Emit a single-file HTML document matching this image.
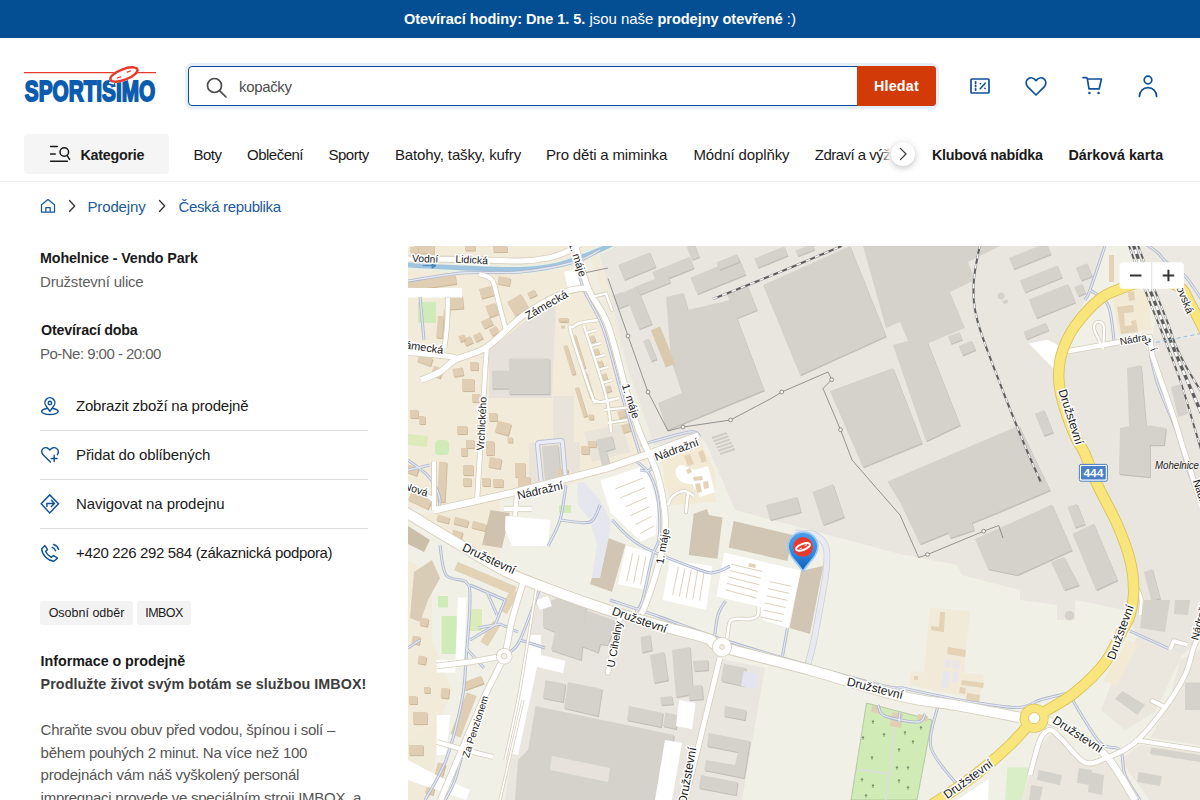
<!DOCTYPE html>
<html lang="cs">
<head>
<meta charset="utf-8">
<title>Mohelnice - Vendo Park | Sportisimo</title>
<style>
*{box-sizing:border-box;margin:0;padding:0}
html,body{width:1200px;height:800px;overflow:hidden;background:#fff}
body{font-family:"Liberation Sans","DejaVu Sans",sans-serif;font-size:15px;color:#1a1a1a;position:relative}
.abs{position:absolute;white-space:nowrap}
.topbar{position:absolute;left:0;top:0;width:1200px;height:38px;background:#044e94;color:#fff}
.topbar .t{position:absolute;left:404px;top:10px;width:392px;font-size:15px;line-height:18px;white-space:nowrap}
.search{position:absolute;left:188px;top:66px;width:748px;height:40px;border:1.5px solid #0a4f96;border-radius:4px;background:#fff;box-shadow:0 0 0 3px #e6eef8}
.hledat{position:absolute;left:857px;top:66px;width:79px;height:40px;background:#d23a08;border-radius:0 4px 4px 0;color:#fff;font-size:14.3px;font-weight:bold}
.kat{position:absolute;left:24px;top:134px;width:145px;height:40px;background:#f5f5f5;border-radius:4px}
.nav{font-size:15px;line-height:20px;top:144.5px;color:#1a1a1a}
.navline{position:absolute;left:0;top:181px;width:1200px;height:1px;background:#ececec}
.bc{color:#1b5a9c;font-size:15px;line-height:20px;top:197.1px}
.h{font-weight:bold;font-size:14.3px;line-height:20px;color:#1a1a1a}
.g{font-size:15px;line-height:20px;color:#5f5f5f}
.row{font-size:15px;line-height:20px;color:#1a1a1a;left:76px}
.sep{position:absolute;left:40px;width:328px;height:1px;background:#dcdcdc}
.tag{position:absolute;top:600.5px;height:24px;background:#f3f3f3;border-radius:3px;font-size:12.5px;line-height:24px;color:#1a1a1a;text-align:center;white-space:nowrap}
#map{position:absolute;left:408px;top:246px;width:792px;height:554px;overflow:hidden;background:#e9e6df;border-radius:3px 0 0 0}
</style>
</head>
<body>
<!-- TOP BAR -->
<div class="topbar"><div class="t" id="tb" style="letter-spacing:-0.03px"><b style="font-size:14.5px">Otevírací hodiny: Dne 1. 5.</b> jsou naše <b style="font-size:14.5px">prodejny otevřené</b> :)</div></div>

<!-- LOGO -->
<svg class="abs" style="left:20px;top:60px" width="144" height="48" viewBox="20 60 144 48">
  <line x1="24" y1="72.600" x2="156" y2="72.600" stroke="#e8392f" stroke-width="1.100"/>
  <text id="logot" x="24.800" y="101.100" font-family="Liberation Sans, sans-serif" font-weight="bold" font-size="29.600" fill="#0b5cae" stroke="#0b5cae" stroke-width="1.900" stroke-linejoin="miter" textLength="130.400" lengthAdjust="spacingAndGlyphs">SPORTISIMO</text>
  <g transform="translate(0 0.900) rotate(-21 123.900 73.600)">
    <ellipse cx="123.900" cy="73.600" rx="15.600" ry="6.600" fill="#fff"/>
    <ellipse cx="123.900" cy="73.600" rx="14.400" ry="5.300" fill="none" stroke="#e8392f" stroke-width="2.500"/>
    <path d="M136.500 68.500 L140.500 71.500 M111.300 78.700 L107.300 75.700" stroke="#fff" stroke-width="1.600"/>
    <path d="M116 74.600 h4.500 M127.300 72.600 h4.500" stroke="#e8392f" stroke-width="1.200"/>
  </g>
</svg>

<!-- SEARCH -->
<div class="search"></div>
<svg class="abs" style="left:204px;top:74.5px" width="26" height="26" viewBox="0 0 26 26" fill="none" stroke="#4a4a4a" stroke-width="1.7" stroke-linecap="round"><circle cx="10.5" cy="10.5" r="7"/><path d="M15.8 15.8 L22 22"/></svg>
<div class="abs" id="kop" style="left:239.00px;top:76.7px;font-size:15px;line-height:20px;color:#4d4d4d;letter-spacing:-0.333px">kopačky</div>
<div class="hledat"><span class="abs" id="hl" style="left:17.00px;top:10px;line-height:20px;letter-spacing:0.200px">Hledat</span></div>

<!-- HEADER ICONS -->
<svg class="abs" style="left:966px;top:72px" width="28" height="28" viewBox="0 0 28 28" fill="none" stroke="#0f5299" stroke-width="1.7" stroke-linejoin="round" stroke-linecap="round">
  <rect x="5" y="7" width="18" height="14" rx="0.8"/>
  <path d="M9.6 10v1.2M9.6 13.4v1.2M9.6 16.8v1.2" stroke-width="1.8"/>
  <path d="M19.2 11.2l-5 5.6" stroke-width="1.6"/>
  <circle cx="14.4" cy="11.6" r="0.9" fill="#0f5299" stroke="none"/><circle cx="19" cy="16.4" r="0.9" fill="#0f5299" stroke="none"/>
</svg>
<svg class="abs" style="left:1022px;top:72px" width="28" height="28" viewBox="0 0 28 28" fill="none" stroke="#0f5299" stroke-width="1.7" stroke-linejoin="round"><path d="M14 23 L5.8 14.8 C3.4 12.4 3.6 8.6 6.2 6.8 C8.6 5.1 11.8 5.8 14 8.6 C16.2 5.8 19.4 5.1 21.8 6.8 C24.4 8.6 24.6 12.4 22.2 14.8 Z"/></svg>
<svg class="abs" style="left:1078px;top:72px" width="28" height="28" viewBox="0 0 28 28" fill="none" stroke="#0f5299" stroke-width="1.7" stroke-linejoin="round" stroke-linecap="round"><path d="M5 5.6h3.2c.6 0 1 .4 1.1 1L11 16.8h10.2L23.4 7H9.6"/><circle cx="11.4" cy="21" r="1.3" fill="#0f5299" stroke="none"/><circle cx="20.6" cy="21" r="1.3" fill="#0f5299" stroke="none"/></svg>
<svg class="abs" style="left:1134px;top:72px" width="28" height="28" viewBox="0 0 28 28" fill="none" stroke="#0f5299" stroke-width="1.7" stroke-linecap="round"><circle cx="14" cy="8" r="3.8"/><path d="M5.4 24.4c0-5 3.8-8.8 8.6-8.8s8.6 3.800 8.600 8.800"/></svg>

<!-- NAV -->
<div class="kat"></div>
<svg class="abs" style="left:48px;top:142px" width="24" height="24" viewBox="0 0 24 24" fill="none" stroke="#1a1a1a" stroke-width="1.5" stroke-linecap="round"><path d="M2.600 4.500h6.800M2.600 12h4.600M2.600 19.200h16.800"/><circle cx="16.300" cy="10" r="4.300"/><path d="M19 13.400l2.600 4"/></svg>
<div class="abs nav" id="n0" style="left:80.50px;font-weight:bold;font-size:14.3px;letter-spacing:-0.249px">Kategorie</div>
<div class="abs nav" id="n1" style="left:193.50px;letter-spacing:-0.500px">Boty</div>
<div class="abs nav" id="n2" style="left:247.00px;letter-spacing:-0.500px">Oblečení</div>
<div class="abs nav" id="n3" style="left:328.50px;letter-spacing:-0.500px">Sporty</div>
<div class="abs nav" id="n4" style="left:395.00px;letter-spacing:-0.131px">Batohy, tašky, kufry</div>
<div class="abs nav" id="n5" style="left:546.00px;letter-spacing:-0.176px">Pro děti a miminka</div>
<div class="abs nav" id="n6" style="left:693.50px;letter-spacing:-0.125px">Módní doplňky</div>
<div class="abs nav" id="n7" style="left:814.8px;width:80px;letter-spacing:-0.52px;overflow:hidden">Zdraví a výživa</div>
<div class="abs" style="left:881px;top:134px;width:39px;height:46px;background:linear-gradient(90deg,rgba(255,255,255,0),#fff 26%)"></div>
<div class="abs" style="left:891px;top:142px;width:24px;height:24px;border-radius:12px;background:#fff;box-shadow:0 2px 7px rgba(0,0,0,.24)"></div>
<svg class="abs" style="left:891px;top:142px" width="24" height="24" viewBox="0 0 24 24" fill="none" stroke="#3a3a3a" stroke-width="1.25" stroke-linecap="round" stroke-linejoin="round"><path d="M9.400 6.400l5.600 5.600-5.600 5.600"/></svg>
<div class="abs nav" id="n8" style="left:932.00px;font-weight:bold;font-size:14.3px;letter-spacing:-0.250px">Klubová nabídka</div>
<div class="abs nav" id="n9" style="left:1068.50px;font-weight:bold;font-size:14.3px;letter-spacing:-0.000px">Dárková karta</div>
<div class="navline"></div>

<!-- BREADCRUMB -->
<svg class="abs" style="left:38px;top:196px" width="20" height="20" viewBox="0 0 20 20" fill="none" stroke="#1b5a9c" stroke-width="1.3" stroke-linejoin="round"><path d="M3.500 8.800L10 3.600l6.500 5.200V16.200H3.500z"/><path d="M7.800 16.200v-4.600h4.400v4.600"/></svg>
<svg class="abs" style="left:62px;top:196px" width="20" height="20" viewBox="0 0 20 20" fill="none" stroke="#333" stroke-width="1.3" stroke-linecap="round" stroke-linejoin="round"><path d="M7.500 4.500l5.200 5.500-5.200 5.500"/></svg>
<div class="abs bc" id="b1" style="left:87.50px;letter-spacing:-0.143px">Prodejny</div>
<svg class="abs" style="left:152px;top:196px" width="20" height="20" viewBox="0 0 20 20" fill="none" stroke="#333" stroke-width="1.3" stroke-linecap="round" stroke-linejoin="round"><path d="M7.500 4.500l5.200 5.500-5.200 5.500"/></svg>
<div class="abs bc" id="b2" style="left:178.50px;letter-spacing:-0.357px">Česká republika</div>

<!-- LEFT PANEL -->
<div class="abs h" id="l1" style="left:40.00px;top:248.20px;letter-spacing:-0.119px">Mohelnice - Vendo Park</div>
<div class="abs g" id="l2" style="left:40.00px;top:272.20px;letter-spacing:-0.200px">Družstevní ulice</div>
<div class="abs h" id="l3" style="left:41.00px;top:320.20px;letter-spacing:-0.192px">Otevírací doba</div>
<div class="abs g" id="l4" style="left:40.00px;top:344.20px;letter-spacing:-0.528px">Po-Ne: 9:00 - 20:00</div>

<div class="abs row" id="r1" style="top:396.20px;letter-spacing:-0.200px">Zobrazit zboží na prodejně</div>
<div class="sep" style="top:430px"></div>
<div class="abs row" id="r2" style="top:445.20px;letter-spacing:-0.126px">Přidat do oblíbených</div>
<div class="sep" style="top:479px"></div>
<div class="abs row" id="r3" style="top:494.20px;letter-spacing:-0.080px">Navigovat na prodejnu</div>
<div class="sep" style="top:528px"></div>
<div class="abs row" id="r4" style="top:543.20px;letter-spacing:-0.345px">+420 226 292 584 (zákaznická podpora)</div>


<!-- ROW ICONS -->
<svg class="abs" style="left:38px;top:393px" width="24" height="24" viewBox="0 0 24 24" fill="none" stroke="#0f5299" stroke-width="1.45" stroke-linejoin="round" stroke-linecap="round"><ellipse cx="11.9" cy="18.400" rx="8.300" ry="3.100"/><path d="M11.900 18.200 L8 12.900 A5 5 0 1 1 15.800 12.900 Z" fill="#fff"/><circle cx="11.900" cy="10" r="1.700"/></svg>
<svg class="abs" style="left:38px;top:442px" width="24" height="24" viewBox="0 0 24 24" fill="none" stroke="#0f5299" stroke-width="1.45" stroke-linejoin="round" stroke-linecap="round"><path d="M12.400 19.900 L5.300 13.100 C3.100 10.900 3.300 7.900 5.200 6.500 C7.400 4.900 10.200 5.600 11.900 8.100 C13.600 5.600 16.400 4.900 18.600 6.500 C20.500 7.900 20.700 10.600 19.400 12.700"/><path d="M13.300 16.400 h5.800 M16.200 13.300 v6.300"/></svg>
<svg class="abs" style="left:38px;top:492px" width="24" height="24" viewBox="0 0 24 24" fill="none" stroke="#0f5299" stroke-width="1.45" stroke-linejoin="miter" stroke-linecap="round"><path d="M3.200 11.800 L11.700 2.900 L20.500 11.800 L11.700 20.900 Z"/><path d="M8.900 14.500 V11.400 H16.300 M13.400 8.300 L16.400 11.400 L13.400 14.500"/></svg>
<svg class="abs" style="left:38px;top:540px" width="24" height="24" viewBox="0 0 24 24" fill="none" stroke="#0f5299" stroke-width="1.45" stroke-linejoin="round" stroke-linecap="round"><path d="M6.900 5.600 L3.600 8.900 C4.300 15.200 9.600 20.500 15.900 21.300 L19.500 18.100 L15.500 15.500 L13.400 17.300 C10.900 16 8.800 14 7.600 11.500 L9.500 9.400 Z"/><path d="M14.200 7.400 C15.800 8 17 9.200 17.600 10.750 M15.500 4.400 C18 5.200 19.800 7 20.600 9.400"/></svg>
<div class="tag" id="t1" style="left:40px;width:93px;letter-spacing:0px">Osobní odběr</div>
<div class="tag" id="t2" style="left:137px;width:54px;letter-spacing:-0.6px">IMBOX</div>

<div class="abs h" id="l5" style="left:40.60px;top:651.20px;letter-spacing:-0.042px">Informace o prodejně</div>
<div class="abs h" id="l6" style="left:40.60px;top:674.20px;color:#3d3d3d;letter-spacing:0.074px">Prodlužte život svým botám se službou IMBOX!</div>
<div class="abs g" id="p1" style="left:40.60px;top:719.20px;line-height:22.500px;color:#555;letter-spacing:-0.259px">Chraňte svou obuv před vodou, špínou i solí –</div>
<div class="abs g" id="p2" style="left:40.60px;top:741.70px;line-height:22.500px;color:#555;letter-spacing:-0.270px">během pouhých 2 minut. Na více než 100</div>
<div class="abs g" id="p3" style="left:40.60px;top:764.20px;line-height:22.500px;color:#555;letter-spacing:-0.222px">prodejnách vám náš vyškolený personál</div>
<div class="abs g" id="p4" style="left:40.60px;top:786.70px;line-height:22.500px;color:#555;letter-spacing:-0.251px">impregnaci provede ve speciálním stroji IMBOX, a</div>

<!-- MAP -->
<div id="map">
<svg id="mapsvg" width="792" height="554" viewBox="408 246 792 554" style="position:absolute;left:0;top:0">
<!--MAPSTART-->
<rect x="408" y="246" width="792" height="554" fill="#f0f0e6"/>
<polygon points="408,246 596,246 612,300 640,430 650,460 560,487 513,493 434,511 408,508" fill="#f3ebda" />
<polygon points="408,512 434,513 500,498 500,560 470,548 440,530 408,516" fill="#f3ebda" />
<polygon points="408,560 432,575 432,640 452,690 440,720 408,740" fill="#f3ebda" />
<polygon points="408,740 440,720 430,800 408,800" fill="#f0ead9" />
<polygon points="597,246 1104,246 1090,290 1072,326 1060,351 1150,338 1200,338 1200,640 1182,655 1137,637 1125,610 1075,600 1075,620 1057,620 1057,605 1020,600 1020,590 962,575 957,565 900,554 735,510 707,445 700,437 645,447 612,300" fill="#e9e6df" />
<polygon points="583,262 592,258 604,300 655,447 645,449 612,330" fill="#eeeee2" />
<polygon points="1128,246 1200,246 1200,338 1152,338 1160,300" fill="#ebe9e2" />
<polygon points="1112,292 1148,290 1152,330 1118,333" fill="#f3ead6" />
<polygon points="1137,637 1182,655 1155,712 1125,730 1101,710 1112,682" fill="#ebe7de" />
<polygon points="1040,745 1052,733 1062,742 1085,766 1110,762 1135,800 1022,800 1030,775" fill="#ebe7de" />
<polygon points="1140,745 1200,752 1200,800 1150,800 1120,760" fill="#ebe7de" />
<polygon points="1180,660 1200,650 1200,745 1150,738 1168,706" fill="#ebe7de" />
<polygon points="1128,640 1138,645 1117,686 1103,680" fill="#f3ead6" />
<polygon points="536,592 608,612 660,628 715,645 722,659 765,668 742,800 505,800 512,754" fill="#e9e6df" />
<polygon points="930,607.5 970,611 964,672.5 984,675 980,700 909,685 911,671 924,672.5" fill="#f2ead9" />
<polygon points="661,452 700,440 715,470 716,502 672,505 664,480" fill="#f3ead6" />
<polygon points="556,302 552,398 489,398 489,350 528,319" fill="#e6e2db" />
<polygon points="584,432 622,424 630,452 592,462" fill="#e9e4da" />
<polygon points="553,396 574,396 574,442 580,442 580,478 529,490 529,443 553,443" fill="#e9e4da" />
<polygon points="418,302 436,302 436,323 418,323" fill="#cfecb8" />
<polygon points="441.7,616 456.7,616 456.7,654 441.7,654" fill="#cfecb8" />
<polygon points="468,609 482,609 482,631 468,631" fill="#dcebb9" />
<polygon points="438,596 448,596 448,607.5 438,607.5" fill="#cfecb8" />
<polygon points="408,434 428,436 427,447 408,445" fill="#dcebb9" />
<rect x="435" y="440" width="14" height="15" rx="4" fill="#cfecb8"/>
<polygon points="559,505 571,505 571,513 559,513" fill="#cfecb8" />
<polygon points="1007.5,767.5 1030,767.5 1022,800 1005,800" fill="#d9edc6" />
<polygon points="866.5,703 932,720 917,800 851,800" fill="#d0ebb5" stroke="#9bb08a" stroke-width="0.6"/>
<polyline points="895,727 886,800" fill="none" stroke="#dddde2" stroke-width="1.6" />
<polyline points="857.5,769.5 888.7,773.7" fill="none" stroke="#dddde2" stroke-width="1.6" />
<path d="M400 264.8 C410.7 265.3 443.9 267.2 464 268 C484.1 268.8 504.8 269.9 520.5 269.4 C536.2 268.9 545.5 267.8 558 264.8 C570.5 261.8 586.5 255.1 595.5 251.6 C604.5 248.1 609.2 245.3 612 244" fill="none" stroke="#e9efe2" stroke-width="9" />
<path d="M400 264.8 C410.7 265.3 443.9 267.2 464 268 C484.1 268.8 504.8 269.9 520.5 269.4 C536.2 268.9 545.5 267.8 558 264.8 C570.5 261.8 586.5 255.1 595.5 251.6 C604.5 248.1 609.2 245.3 612 244" fill="none" stroke="#9fc4dd" stroke-width="4.8" />
<path d="M423 265.700 h12 M432 263.200 l4 2.500 -4 2.500 z" stroke="#4a86b8" stroke-width="1" fill="#4a86b8"/>
<polygon points="666.9,298.3 683.9,294.3 688.9,311.3 730.9,301.3 764.9,391.3 667.9,431.3 658.9,404.3 682.9,394.3 671.9,361.3" fill="#c2bfb8" />
<polygon points="763.9,286.3 850.9,247.3 886.9,337.3 800.9,376.3" fill="#c2bfb8" />
<polygon points="830.9,392.3 893.9,369.3 922.9,444.3 863.9,468.3" fill="#c2bfb8" />
<polygon points="893.9,346.3 925.9,337.3 960.9,426.3 926.9,442.3" fill="#c2bfb8" />
<polygon points="888.4,482.8 1019.9,426.8 1050.9,491.3 996.9,514.3 920.9,545.3 900.9,503.3" fill="#c2bfb8" />
<polygon points="975.9,540.3 1052.9,505.8 1072.9,551.3 1050.9,561.3 1017.9,576.3 988.9,570.3" fill="#c2bfb8" />
<polygon points="1073.4,535 1094.6,525 1118.4,581.3 1096.9,591.3" fill="#c2bfb8" />
<polygon points="1068.4,508.3 1077.9,505 1085.9,525.3 1075.9,528.8" fill="#c2bfb8" />
<polygon points="1051.9,563.3 1064.9,558.3 1079.9,586.3 1064.9,591.3" fill="#c2bfb8" />
<polygon points="1127.9,369.3 1141.9,366.3 1146.9,426.3 1166.9,429.3 1164.9,446.3 1150.9,446.3 1150.9,478.3 1119.9,475.3 1120.9,429.3 1129.9,427.3" fill="#c2bfb8" />
<polygon points="536.4,707.3 674.9,736.3 663.9,801.3 515.9,801.3 518.9,761.3 528.9,751.3" fill="#c2bfb8" />
<polygon points="546.4,681.3 566.4,685.3 563.9,703.3 543.9,699.3" fill="#c2bfb8" />
<polygon points="568.9,683.3 602.9,690.3 598.9,717.3 564.9,709.3" fill="#c2bfb8" />
<polygon points="543.9,608.3 552.9,601.3 562.9,598.3 586.9,608.3 581.9,661.3 551.9,651.3 555.9,633.3 543.9,628.3" fill="#c2bfb8" />
<polygon points="586.9,611.3 616.4,622.3 608.9,646.3 600.9,645.3 598.9,653.8 581.9,647.3" fill="#c2bfb8" />
<polygon points="641.4,638.3 650.9,636.3 652.9,651.3 642.9,653.8" fill="#c2bfb8" />
<polygon points="650.9,656.3 664.9,653.3 668.9,681.3 654.9,684.3" fill="#c2bfb8" />
<polygon points="672.9,651.3 690.9,648.3 693.9,695.3 676.9,698.3" fill="#c2bfb8" />
<polygon points="693.9,662.3 708.9,661.3 708.9,671.3 694.9,672.3" fill="#c2bfb8" />
<polygon points="661.4,698.3 672.9,697.3 673.9,705.3 661.9,706.3" fill="#c2bfb8" />
<polygon points="688.9,687.3 702.9,686.3 703.9,700.3 689.9,701.3" fill="#c2bfb8" />
<polygon points="629.9,707.3 663.9,714.3 661.9,728.3 627.9,721.3" fill="#c2bfb8" />
<polygon points="666.4,713.8 678.9,716.3 676.9,730.3 663.9,727.3" fill="#c2bfb8" />
<polygon points="724.6,665 746.9,669.3 744.9,687.3 721.9,682.3" fill="#c2bfb8" />
<polygon points="709.6,734.3 750.9,742.3 744.9,779.3 704.9,771.3 706.9,761.3 735.9,766.3 738.9,753.3 707.9,747.3" fill="#c2bfb8" />
<polygon points="701.9,776.3 738.4,783.3 736.9,796.3 699.9,789.3" fill="#c2bfb8" />
<polygon points="725.9,707.3 746.9,711.3 745.9,721.3 724.9,717.3" fill="#c2bfb8" />
<polygon points="766.9,506.3 797.9,498.3 801.9,513.3 770.9,521.3" fill="#c2bfb8" />
<polygon points="813.4,493.3 833.9,485.3 844.9,518.3 823.9,526.3" fill="#c2bfb8" />
<polygon points="937.9,495.3 962.9,489.3 974.9,531.3 950.9,539.3" fill="#c2bfb8" />
<polygon points="542.9,447.9 558.9,446.3 561.9,481.3 545.9,482.8" fill="#c2bfb8" />
<polygon points="509.9,359.8 550.5,359.8 550.5,395.3 509.9,395.3" fill="#c2bfb8" />
<polygon points="492.9,372 509.9,372 509.9,389.8 492.9,389.8" fill="#c2bfb8" />
<polygon points="596.9,441.3 612.9,437.3 615.9,449.3 606.9,452.3 610.9,465.3 602.9,467.3" fill="#c2bfb8" />
<polygon points="666,297 683,293 688,310 730,300 764,390 667,430 658,403 682,393 671,360" fill="#d5d2cc" />
<polygon points="763,285 850,246 886,336 800,375" fill="#d5d2cc" />
<polygon points="830,391 893,368 922,443 863,467" fill="#d5d2cc" />
<polygon points="893,345 925,336 960,425 926,441" fill="#d5d2cc" />
<polygon points="887.5,481.5 1019,425.5 1050,490 996,513 920,544 900,502" fill="#d5d2cc" />
<polygon points="975,539 1052,504.5 1072,550 1050,560 1017,575 988,569" fill="#d5d2cc" />
<polygon points="1072.5,533.7 1093.7,523.7 1117.5,580 1096,590" fill="#d5d2cc" />
<polygon points="1067.5,507 1077,503.7 1085,524 1075,527.5" fill="#d5d2cc" />
<polygon points="1051,562 1064,557 1079,585 1064,590" fill="#d5d2cc" />
<polygon points="1127,368 1141,365 1146,425 1166,428 1164,445 1150,445 1150,477 1119,474 1120,428 1129,426" fill="#d5d2cc" />
<polygon points="535.5,706 674,735 663,800 515,800 518,760 528,750" fill="#d5d2cc" />
<polygon points="545.5,680 565.5,684 563,702 543,698" fill="#d5d2cc" />
<polygon points="568,682 602,689 598,716 564,708" fill="#d5d2cc" />
<polygon points="543,607 552,600 562,597 586,607 581,660 551,650 555,632 543,627" fill="#d5d2cc" />
<polygon points="586,610 615.5,621 608,645 600,644 598,652.5 581,646" fill="#d5d2cc" />
<polygon points="640.5,637 650,635 652,650 642,652.5" fill="#d5d2cc" />
<polygon points="650,655 664,652 668,680 654,683" fill="#d5d2cc" />
<polygon points="672,650 690,647 693,694 676,697" fill="#d5d2cc" />
<polygon points="693,661 708,660 708,670 694,671" fill="#d5d2cc" />
<polygon points="660.5,697 672,696 673,704 661,705" fill="#d5d2cc" />
<polygon points="688,686 702,685 703,699 689,700" fill="#d5d2cc" />
<polygon points="629,706 663,713 661,727 627,720" fill="#d5d2cc" />
<polygon points="665.5,712.5 678,715 676,729 663,726" fill="#d5d2cc" />
<polygon points="723.7,663.7 746,668 744,686 721,681" fill="#d5d2cc" />
<polygon points="708.7,733 750,741 744,778 704,770 706,760 735,765 738,752 707,746" fill="#d5d2cc" />
<polygon points="701,775 737.5,782 736,795 699,788" fill="#d5d2cc" />
<polygon points="725,706 746,710 745,720 724,716" fill="#d5d2cc" />
<polygon points="766,505 797,497 801,512 770,520" fill="#d5d2cc" />
<polygon points="812.5,492 833,484 844,517 823,525" fill="#d5d2cc" />
<polygon points="937,494 962,488 974,530 950,538" fill="#d5d2cc" />
<polygon points="542,446.6 558,445 561,480 545,481.5" fill="#d5d2cc" />
<polygon points="509,358.5 549.6,358.5 549.6,394 509,394" fill="#d5d2cc" />
<polygon points="492,370.7 509,370.7 509,388.5 492,388.5" fill="#d5d2cc" />
<polygon points="596,440 612,436 615,448 606,451 610,464 602,466" fill="#d5d2cc" />
<polygon points="552,756 610,768 608,782 550,770" fill="#e7e3dc" />
<polygon points="863,246 1000,246 968,262 975,280 950,292 965,328 912,350 900,322 886,328" fill="#d5d2cc" />
<polygon points="619,266.1 650.6,253.3 656.6,268.1 625,280.9" fill="#c2bfb8" />
<polygon points="618.2,265 649.8,252.2 655.8,267 624.2,279.8" fill="#d5d2cc" />
<polygon points="653,273 690.1,258 694.6,269.2 657.5,284.2" fill="#c2bfb8" />
<polygon points="652.2,271.9 689.3,256.9 693.8,268.1 656.7,283.1" fill="#d5d2cc" />
<polygon points="634.4,288.7 667.8,275.2 671.2,283.5 637.8,297" fill="#c2bfb8" />
<polygon points="633.6,287.6 667,274.1 670.4,282.4 637,295.9" fill="#d5d2cc" />
<polygon points="691.3,278.5 739.5,259 746.3,275.7 698.1,295.2" fill="#c2bfb8" />
<polygon points="690.5,277.4 738.7,257.9 745.5,274.6 697.3,294.1" fill="#d5d2cc" />
<polygon points="755.1,259.5 784.8,247.5 788.5,256.7 758.8,268.7" fill="#c2bfb8" />
<polygon points="754.3,258.4 784,246.4 787.7,255.6 758,267.6" fill="#d5d2cc" />
<polygon points="727.7,295.2 748.1,286.9 757.9,311 737.5,319.3" fill="#c2bfb8" />
<polygon points="726.9,294.1 747.3,285.8 757.1,309.9 736.7,318.2" fill="#d5d2cc" />
<polygon points="624.8,293.2 637.8,287.9 652.8,325 639.8,330.3" fill="#c2bfb8" />
<polygon points="624,292.1 637,286.8 652,323.9 639,329.2" fill="#d5d2cc" />
<polygon points="614.5,296.5 623.8,292.7 629.1,305.7 619.8,309.5" fill="#c2bfb8" />
<polygon points="613.7,295.4 623,291.6 628.3,304.6 619,308.4" fill="#d5d2cc" />
<polygon points="643.9,342 649.5,339.8 657.7,360.2 652.1,362.4" fill="#c2bfb8" />
<polygon points="643.1,340.9 648.7,338.7 656.9,359.1 651.3,361.3" fill="#d5d2cc" />
<polygon points="687.5,248.1 694.9,245.1 700.1,258.1 692.7,261.1" fill="#c2bfb8" />
<polygon points="686.7,247 694.1,244 699.3,257 691.9,260" fill="#d5d2cc" />
<polygon points="717.1,263.5 737.5,255.3 740.5,262.7 720.1,270.9" fill="#c2bfb8" />
<polygon points="716.3,262.4 736.7,254.2 739.7,261.6 719.3,269.8" fill="#d5d2cc" />
<polygon points="796.3,251.7 813,244.9 815.3,250.5 798.6,257.3" fill="#c2bfb8" />
<polygon points="795.5,250.6 812.2,243.8 814.5,249.4 797.8,256.2" fill="#d5d2cc" />
<polygon points="650.9,330.3 660.1,326.6 675.1,363.7 665.9,367.4" fill="#d9c9ad" />
<polygon points="1010,259 1047.1,244 1051.6,255.2 1014.5,270.2" fill="#c2bfb8" />
<polygon points="1009.2,257.9 1046.3,242.9 1050.8,254.1 1013.7,269.1" fill="#d5d2cc" />
<polygon points="1020.8,281.6 1057.9,266.6 1062.8,278.6 1025.7,293.6" fill="#c2bfb8" />
<polygon points="1020,280.5 1057.1,265.5 1062,277.5 1024.9,292.5" fill="#d5d2cc" />
<polygon points="1029.6,300.7 1068.5,285 1076,303.5 1037.1,319.2" fill="#c2bfb8" />
<polygon points="1028.8,299.6 1067.7,283.9 1075.2,302.4 1036.3,318.1" fill="#d5d2cc" />
<polygon points="1076.6,268.9 1087.7,264.4 1093,277.3 1081.9,281.8" fill="#c2bfb8" />
<polygon points="1075.8,267.8 1086.9,263.3 1092.2,276.2 1081.1,280.7" fill="#d5d2cc" />
<polygon points="1075.2,288 1082.6,285 1086.4,294.2 1079,297.2" fill="#c2bfb8" />
<polygon points="1074.4,286.9 1081.8,283.9 1085.6,293.1 1078.2,296.1" fill="#d5d2cc" />
<polygon points="948.7,337.6 959.9,333.1 962.9,340.6 951.7,345.1" fill="#c2bfb8" />
<polygon points="947.9,336.5 959.1,332 962.1,339.5 950.9,344" fill="#d5d2cc" />
<polygon points="959.4,347.1 972.4,341.8 976.2,351.1 963.2,356.4" fill="#c2bfb8" />
<polygon points="958.6,346 971.6,340.7 975.4,350 962.4,355.3" fill="#d5d2cc" />
<polygon points="1035.7,414.8 1044.9,411.1 1053.9,433.4 1044.7,437.1" fill="#c2bfb8" />
<polygon points="1034.9,413.7 1044.1,410 1053.1,432.3 1043.9,436" fill="#d5d2cc" />
<polygon points="1024.2,332.9 1046.4,323.9 1049.4,331.3 1027.2,340.3" fill="#c2bfb8" />
<polygon points="1023.4,331.8 1045.6,322.8 1048.6,330.2 1026.4,339.2" fill="#d5d2cc" />
<polygon points="1144.6,572.8 1153.3,570.4 1161,599.4 1152.3,601.8" fill="#c2bfb8" />
<polygon points="1143.8,571.7 1152.5,569.3 1160.2,598.3 1151.5,600.7" fill="#d5d2cc" />
<polygon points="1128,470 1128,470 1128,470 1128,470" fill="#d5d2cc" />
<polygon points="733.7,521 792.5,535 787.5,561 728.7,547.5" fill="#d1c5b3" />
<polygon points="693.7,513.7 707,509 709,515 722.5,517.5 717.5,558.7 688.7,555" fill="#d1c5b3" />
<polygon points="800.8,571 823.3,566 810,634 789.5,628" fill="#d1c5b3" />
<polygon points="605,537 625.6,544.4 612,592 590,584" fill="#d1c5b3" />
<polygon points="490.5,510 510,513 502,548 482,545" fill="#cfc3b0" />
<polygon points="1115,698.7 1122.5,691 1145,705 1137.5,715" fill="#d5d2cc" />
<polygon points="1138.7,772 1162,776 1160,786 1137,782" fill="#d5d2cc" />
<polygon points="1151,747.5 1200,755 1200,762 1150,754" fill="#d5d2cc" />
<polygon points="1185,682.5 1200,682.5 1200,710 1185,710" fill="#d5d2cc" />
<polygon points="1143.7,600 1170,600 1165,632 1140,628" fill="#d5d2cc" />
<polygon points="1175,600 1190,600 1188,615 1174,614" fill="#d5d2cc" />
<polygon points="1038.7,770 1062,775 1060,785 1037,780" fill="#d5d2cc" />
<polygon points="1090,772 1104,775 1102,795 1088,792" fill="#d5d2cc" />
<polygon points="1031,785 1043,787 1040,800 1029,800" fill="#d5d2cc" />
<polygon points="1078.7,768 1092,770 1090,785 1077,783" fill="#d5d2cc" />
<polygon points="743.7,671 758.7,674 756,689 741,686" fill="#e4e4ee" />
<circle cx="1001" cy="296" r="3.600" fill="#d5d2cc"/>
<rect x="1003" y="300" width="5" height="4" fill="#d5d2cc" transform="rotate(-20 1005 302)"/>
<circle cx="1069.5" cy="615.7" r="4.8" fill="#d5d2cc"/>
<polygon points="404.4,283.3 455.9,276 457.2,284.9 405.7,292.2" fill="#cdb999" />
<polygon points="403.6,282.2 455.1,274.9 456.4,283.8 404.9,291.1" fill="#dfceb3" />
<polygon points="447.3,298.8 463.2,297.4 464.3,309.4 448.4,310.8" fill="#cdb999" />
<polygon points="446.5,297.7 462.4,296.3 463.5,308.3 447.6,309.7" fill="#dfceb3" />
<polygon points="444.8,309.9 450.7,310.4 448.8,332.3 442.9,331.8" fill="#cdb999" />
<polygon points="444,308.8 449.9,309.3 448,331.2 442.1,330.7" fill="#dfceb3" />
<polygon points="438.8,316.9 444.7,317.4 442.8,339.3 436.9,338.8" fill="#cdb999" />
<polygon points="438,315.8 443.9,316.3 442,338.2 436.1,337.7" fill="#dfceb3" />
<polygon points="479.7,290.1 493.3,286.5 495.9,296.1 482.3,299.7" fill="#cdb999" />
<polygon points="478.9,289 492.5,285.4 495.1,295 481.5,298.6" fill="#dfceb3" />
<polygon points="486,307.2 495.4,303.8 499.6,315 490.2,318.4" fill="#cdb999" />
<polygon points="485.2,306.1 494.6,302.7 498.8,313.9 489.4,317.3" fill="#dfceb3" />
<polygon points="481.6,322.6 490.6,318.4 494,325.6 485,329.8" fill="#cdb999" />
<polygon points="480.8,321.5 489.8,317.3 493.2,324.5 484.2,328.7" fill="#dfceb3" />
<polygon points="489.7,330.6 496.9,327.2 499.9,333.6 492.7,337" fill="#cdb999" />
<polygon points="488.9,329.5 496.1,326.1 499.1,332.5 491.9,335.9" fill="#dfceb3" />
<polygon points="473.7,336.6 480.9,333.2 483.9,339.6 476.7,343" fill="#cdb999" />
<polygon points="472.9,335.5 480.1,332.1 483.1,338.5 475.9,341.9" fill="#dfceb3" />
<polygon points="463.7,340.6 470.9,337.2 473.9,343.6 466.7,347" fill="#cdb999" />
<polygon points="462.9,339.5 470.1,336.1 473.1,342.5 465.9,345.9" fill="#dfceb3" />
<polygon points="459,337.3 464.6,335.3 466.6,340.9 461,342.9" fill="#cdb999" />
<polygon points="458.2,336.2 463.8,334.2 465.8,339.8 460.2,341.8" fill="#dfceb3" />
<polygon points="499.6,277.1 511.4,279.2 510,287.1 498.2,285" fill="#cdb999" />
<polygon points="498.8,276 510.6,278.1 509.2,286 497.4,283.9" fill="#dfceb3" />
<polygon points="507.9,303.2 521.7,295.2 529.7,309 515.9,317" fill="#cdb999" />
<polygon points="507.1,302.1 520.9,294.1 528.9,307.9 515.1,315.9" fill="#dfceb3" />
<polygon points="527.9,294.1 535.2,290.7 537.7,296.1 530.4,299.5" fill="#cdb999" />
<polygon points="527.1,293 534.4,289.6 536.9,295 529.6,298.4" fill="#dfceb3" />
<polygon points="560.8,319.1 568.8,319.1 568.8,323.1 560.8,323.1" fill="#cdb999" />
<polygon points="560,318 568,318 568,322 560,322" fill="#dfceb3" />
<polygon points="420.6,354.9 433.7,359.7 431,367.3 417.9,362.5" fill="#cdb999" />
<polygon points="419.8,353.8 432.9,358.6 430.2,366.2 417.1,361.4" fill="#dfceb3" />
<polygon points="434.8,366.7 444.2,370.1 440.8,379.5 431.4,376.1" fill="#cdb999" />
<polygon points="434,365.6 443.4,369 440,378.4 430.6,375" fill="#dfceb3" />
<polygon points="453.2,370 463,368.3 464.4,376.2 454.6,377.9" fill="#cdb999" />
<polygon points="452.4,368.9 462.2,367.2 463.6,375.1 453.8,376.8" fill="#dfceb3" />
<polygon points="470.8,363.1 478.8,363.1 478.8,371.1 470.8,371.1" fill="#cdb999" />
<polygon points="470,362 478,362 478,370 470,370" fill="#dfceb3" />
<polygon points="462.8,380.1 474.8,380.1 474.8,392.1 462.8,392.1" fill="#cdb999" />
<polygon points="462,379 474,379 474,391 462,391" fill="#dfceb3" />
<polygon points="472.8,395.1 480.8,395.1 480.8,403.1 472.8,403.1" fill="#cdb999" />
<polygon points="472,394 480,394 480,402 472,402" fill="#dfceb3" />
<polygon points="410.8,411.1 418.8,411.1 418.8,419.1 410.8,419.1" fill="#cdb999" />
<polygon points="410,410 418,410 418,418 410,418" fill="#dfceb3" />
<polygon points="419.8,417.1 425.8,417.1 425.8,425.1 419.8,425.1" fill="#cdb999" />
<polygon points="419,416 425,416 425,424 419,424" fill="#dfceb3" />
<polygon points="457.8,427.1 467.8,427.1 467.8,435.1 457.8,435.1" fill="#cdb999" />
<polygon points="457,426 467,426 467,434 457,434" fill="#dfceb3" />
<polygon points="466.8,441.1 474.8,441.1 474.8,449.1 466.8,449.1" fill="#cdb999" />
<polygon points="466,440 474,440 474,448 466,448" fill="#dfceb3" />
<polygon points="461.8,449.1 467.8,449.1 467.8,457.1 461.8,457.1" fill="#cdb999" />
<polygon points="461,448 467,448 467,456 461,456" fill="#dfceb3" />
<polygon points="463.8,466.1 473.8,466.1 473.8,476.1 463.8,476.1" fill="#cdb999" />
<polygon points="463,465 473,465 473,475 463,475" fill="#dfceb3" />
<polygon points="463.8,479.1 471.8,479.1 471.8,487.1 463.8,487.1" fill="#cdb999" />
<polygon points="463,478 471,478 471,486 463,486" fill="#dfceb3" />
<polygon points="489.8,414.1 497.8,414.1 497.8,422.1 489.8,422.1" fill="#cdb999" />
<polygon points="489,413 497,413 497,421 489,421" fill="#dfceb3" />
<polygon points="498.6,421.5 512.1,425.1 509,436.7 495.5,433.1" fill="#cdb999" />
<polygon points="497.8,420.4 511.3,424 508.2,435.6 494.7,432" fill="#dfceb3" />
<polygon points="508.3,438.6 513.3,438.6 513.3,443.6 508.3,443.6" fill="#cdb999" />
<polygon points="507.5,437.5 512.5,437.5 512.5,442.5 507.5,442.5" fill="#dfceb3" />
<polygon points="486.8,442.1 494.8,442.1 494.8,456.1 486.8,456.1" fill="#cdb999" />
<polygon points="486,441 494,441 494,455 486,455" fill="#dfceb3" />
<polygon points="490.8,458.1 502.6,460.2 500.8,470.1 489,468" fill="#cdb999" />
<polygon points="490,457 501.8,459.1 500,469 488.2,466.9" fill="#dfceb3" />
<polygon points="482.8,479.1 490.8,479.1 490.8,487.1 482.8,487.1" fill="#cdb999" />
<polygon points="482,478 490,478 490,486 482,486" fill="#dfceb3" />
<polygon points="493.8,480.1 503.8,480.1 503.8,488.1 493.8,488.1" fill="#cdb999" />
<polygon points="493,479 503,479 503,487 493,487" fill="#dfceb3" />
<polygon points="515.8,464.1 525.8,464.1 525.8,478.1 515.8,478.1" fill="#cdb999" />
<polygon points="515,463 525,463 525,477 515,477" fill="#dfceb3" />
<polygon points="518.8,478.1 530.8,478.1 530.8,488.1 518.8,488.1" fill="#cdb999" />
<polygon points="518,477 530,477 530,487 518,487" fill="#dfceb3" />
<polygon points="439.9,462.9 447.8,463.3 445.7,503.3 437.8,502.9" fill="#cdb999" />
<polygon points="439.1,461.8 447,462.2 444.9,502.2 437,501.8" fill="#dfceb3" />
<polygon points="408.5,465.3 419.8,469.4 417.1,476.9 405.8,472.8" fill="#cdb999" />
<polygon points="407.7,464.2 419,468.3 416.3,475.8 405,471.7" fill="#dfceb3" />
<polygon points="412.9,491.9 432.9,501.2 428.7,510.3 408.7,501" fill="#cdb999" />
<polygon points="412.1,490.8 432.1,500.1 427.9,509.2 407.9,499.9" fill="#dfceb3" />
<polygon points="581.8,447.1 589.8,447.1 589.8,455.1 581.8,455.1" fill="#cdb999" />
<polygon points="581,446 589,446 589,454 581,454" fill="#dfceb3" />
<polygon points="588.8,442.1 596.8,442.1 596.8,448.1 588.8,448.1" fill="#cdb999" />
<polygon points="588,441 596,441 596,447 588,447" fill="#dfceb3" />
<polygon points="589.3,415.6 594.3,415.6 594.3,420.6 589.3,420.6" fill="#cdb999" />
<polygon points="588.5,414.5 593.5,414.5 593.5,419.5 588.5,419.5" fill="#dfceb3" />
<polygon points="558.8,470.1 568.8,470.1 568.8,478.1 558.8,478.1" fill="#cdb999" />
<polygon points="558,469 568,469 568,477 558,477" fill="#dfceb3" />
<polygon points="438.8,515.6 450.4,518.8 448.8,524.6 437.2,521.4" fill="#cdb999" />
<polygon points="438,514.5 449.6,517.7 448,523.5 436.4,520.3" fill="#dfceb3" />
<polygon points="455.9,517.9 469.5,521.5 467.7,528.3 454.1,524.7" fill="#cdb999" />
<polygon points="455.1,516.8 468.7,520.4 466.9,527.2 453.3,523.6" fill="#dfceb3" />
<polygon points="473.9,521.9 487.5,525.5 485.7,532.3 472.1,528.7" fill="#cdb999" />
<polygon points="473.1,520.8 486.7,524.4 484.9,531.2 471.3,527.6" fill="#dfceb3" />
<polygon points="454,530.9 463.7,533.5 461.6,541.3 451.9,538.7" fill="#cdb999" />
<polygon points="453.2,529.8 462.9,532.4 460.8,540.2 451.1,537.6" fill="#dfceb3" />
<polygon points="409.8,697.1 417.8,697.1 417.8,705.1 409.8,705.1" fill="#cdb999" />
<polygon points="409,696 417,696 417,704 409,704" fill="#dfceb3" />
<polygon points="419.6,656.5 427.4,657.9 426,665.7 418.2,664.3" fill="#cdb999" />
<polygon points="418.8,655.4 426.6,656.8 425.2,664.6 417.4,663.2" fill="#dfceb3" />
<polygon points="413.6,636.5 421.4,637.9 420,645.7 412.2,644.3" fill="#cdb999" />
<polygon points="412.8,635.4 420.6,636.8 419.2,644.6 411.4,643.2" fill="#dfceb3" />
<polygon points="421.6,618.5 429.4,619.9 428,627.7 420.2,626.3" fill="#cdb999" />
<polygon points="420.8,617.4 428.6,618.8 427.2,626.6 419.4,625.2" fill="#dfceb3" />
<polygon points="413.6,596.5 421.4,597.9 420,605.7 412.2,604.3" fill="#cdb999" />
<polygon points="412.8,595.4 420.6,596.8 419.2,604.6 411.4,603.2" fill="#dfceb3" />
<polygon points="424.8,688.1 430.8,688.1 430.8,694.1 424.8,694.1" fill="#cdb999" />
<polygon points="424,687 430,687 430,693 424,693" fill="#dfceb3" />
<polygon points="413.8,713.1 427.8,713.1 427.8,725.1 413.8,725.1" fill="#cdb999" />
<polygon points="413,712 427,712 427,724 413,724" fill="#dfceb3" />
<polygon points="409.8,746.1 423.8,746.1 423.8,756.1 409.8,756.1" fill="#cdb999" />
<polygon points="409,745 423,745 423,755 409,755" fill="#dfceb3" />
<polygon points="438.7,763.3 446.5,765.4 442.9,778.9 435.1,776.8" fill="#cdb999" />
<polygon points="437.9,762.2 445.7,764.3 442.1,777.8 434.3,775.7" fill="#dfceb3" />
<polygon points="415.8,772.1 425.8,772.1 425.8,780.1 415.8,780.1" fill="#cdb999" />
<polygon points="415,771 425,771 425,779 415,779" fill="#dfceb3" />
<polygon points="428,786.2 435.7,788.3 433.6,796 425.9,793.9" fill="#cdb999" />
<polygon points="427.2,785.1 434.9,787.2 432.8,794.9 425.1,792.8" fill="#dfceb3" />
<polygon points="442.3,688.8 450.2,689.5 449.3,699.4 441.4,698.7" fill="#cdb999" />
<polygon points="441.5,687.7 449.4,688.4 448.5,698.3 440.6,697.6" fill="#dfceb3" />
<polygon points="463,683.8 481.8,676.9 484.6,684.4 465.8,691.3" fill="#cdb999" />
<polygon points="462.2,682.7 481,675.8 483.8,683.3 465,690.2" fill="#dfceb3" />
<polygon points="589.1,338.1 594.8,336.4 596.5,342.1 590.8,343.8" fill="#cdb999" />
<polygon points="588.3,337 594,335.3 595.7,341 590,342.7" fill="#dfceb3" />
<polygon points="593.1,351.1 598.8,349.4 600.5,355.1 594.8,356.8" fill="#cdb999" />
<polygon points="592.3,350 598,348.3 599.7,354 594,355.7" fill="#dfceb3" />
<polygon points="597.1,363.1 602.8,361.4 604.5,367.1 598.8,368.8" fill="#cdb999" />
<polygon points="596.3,362 602,360.3 603.7,366 598,367.7" fill="#dfceb3" />
<polygon points="601.1,376.1 606.8,374.4 608.5,380.1 602.8,381.8" fill="#cdb999" />
<polygon points="600.3,375 606,373.3 607.7,379 602,380.7" fill="#dfceb3" />
<polygon points="605.1,388.1 610.8,386.4 612.5,392.1 606.8,393.8" fill="#cdb999" />
<polygon points="604.3,387 610,385.3 611.7,391 606,392.7" fill="#dfceb3" />
<polygon points="572.2,337.5 576.5,336.2 586.4,368.7 582.1,370" fill="#cdb999" />
<polygon points="571.4,336.4 575.7,335.1 585.6,367.6 581.3,368.9" fill="#dfceb3" />
<polygon points="582.8,374.3 587.2,373 594.8,397.9 590.4,399.2" fill="#cdb999" />
<polygon points="582,373.2 586.4,371.9 594,396.8 589.6,398.1" fill="#dfceb3" />
<polygon points="564,347.3 567.8,346.2 576.6,374.9 572.8,376" fill="#cdb999" />
<polygon points="563.2,346.2 567,345.1 575.8,373.8 572,374.9" fill="#dfceb3" />
<polygon points="575.5,389.3 579.3,388.2 588.1,416.9 584.3,418" fill="#cdb999" />
<polygon points="574.7,388.2 578.5,387.1 587.3,415.8 583.5,416.9" fill="#dfceb3" />
<polygon points="618,412.9 625.6,410.6 627.6,417.3 620,419.6" fill="#cdb999" />
<polygon points="617.2,411.8 624.8,409.5 626.8,416.2 619.2,418.5" fill="#dfceb3" />
<polygon points="621.8,426.4 629.5,424.1 631.8,431.8 624.1,434.1" fill="#cdb999" />
<polygon points="621,425.3 628.7,423 631,430.7 623.3,433" fill="#dfceb3" />
<polygon points="559.3,319.6 566.3,319.6 566.3,322.6 559.3,322.6" fill="#cdb999" />
<polygon points="558.5,318.5 565.5,318.5 565.5,321.5 558.5,321.5" fill="#dfceb3" />
<polygon points="561,325.5 565,325.5 565,328.5 561,328.5" fill="#dfceb3" />
<polygon points="414.8,246.6 434.8,246.6 434.8,254.6 414.8,254.6" fill="#cdb999" />
<polygon points="414,245.5 434,245.5 434,253.5 414,253.5" fill="#dfceb3" />
<polygon points="410.8,248.1 418.8,248.1 418.8,254.1 410.8,254.1" fill="#cdb999" />
<polygon points="410,247 418,247 418,253 410,253" fill="#dfceb3" />
<polygon points="493.8,247.1 507.8,247.1 507.8,253.1 493.8,253.1" fill="#cdb999" />
<polygon points="493,246 507,246 507,252 493,252" fill="#dfceb3" />
<polygon points="465.8,246.6 475.8,246.6 475.8,251.6 465.8,251.6" fill="#cdb999" />
<polygon points="465,245.5 475,245.5 475,250.5 465,250.5" fill="#dfceb3" />
<polyline points="456,566 515,591" fill="none" stroke="#e3d3b6" stroke-width="9" />
<polyline points="515,591 503,612" fill="none" stroke="#e3d3b6" stroke-width="9" />
<polyline points="497,623 484,644" fill="none" stroke="#e3d3b6" stroke-width="9" />
<polygon points="466.7,692.5 476.7,696 460.5,737.5 450.5,733.7" fill="#dfceb3" />
<polygon points="414,572 432,560 440,578 428,600 420,622 410,618" fill="#d8ccb6" />
<polygon points="408,526 430,540 424,552 408,544" fill="#cbbfa9" />
<polygon points="408,288 462,288 462,297.5 408,297.5" fill="#ffffff" />
<polygon points="505.5,516 550.5,520 548,546 512,546 505,530" fill="#ffffff" />
<polygon points="600.3,480.6 645.3,465.6 657.5,505 655.6,535 640.6,541.6 610.6,512.5" fill="#ffffff" />
<polygon points="724.3,552.6 800.8,570.6 788.4,628 762.6,620 759,606.6 716.5,596.5" fill="#ffffff" />
<polygon points="670,560 712.5,566 706,610 662.5,600" fill="#ffffff" />
<polygon points="626,546 652,552 646,590 618,584" fill="#ffffff" />
<polygon points="1028.7,343.5 1047.5,339.7 1060,346 1056,371" fill="#ffffff" />
<polygon points="957.5,800 988.7,778.7 988,800" fill="#ffffff" />
<polygon points="436.7,660 455.5,660 455.5,672.5 436.7,672.5" fill="#ffffff" />
<polygon points="458,597.5 466.7,597.5 464,660 455.5,660" fill="#ffffff" />
<polygon points="530.5,635 541,635 541,655 565.5,661 563,673 537,667 518,755 506.7,752.5" fill="#ffffff" />
<polygon points="536,600 548,596 552,606 540,610" fill="#ffffff" />
<polygon points="679,700 695.5,703 692,729 676,726" fill="#ffffff" />
<polygon points="665,740 682,743 672,800 655,800" fill="#ffffff" />
<polygon points="436.7,715 450.5,715 446,755 436.7,755" fill="#ffffff" />
<polygon points="408,760 436,775 470,790 466,800 408,780" fill="#ffffff" />
<polygon points="564,272 580,268 584,284 568,288" fill="#ffffff" />
<path d="M677 477 C673 470 678 463 685 466 L694 470 L708 466 L715 492 L700 497 L692 484 C686 484 680 483 677 477 Z" fill="#ffffff" stroke="none" stroke-width="0" />
<polygon points="577,482.5 584,482 600,500 611,522 609,537 600,578 592,578 597,545 590,520 578,505" fill="#e6e6ee" />
<path d="M795 533 C798.2 533.2 808.8 532.2 814 534.5 C819.2 536.8 824 540.8 826 547 C828 553.2 826.8 562.8 826 572 C825.2 581.2 823 590.7 821 602 C819 613.3 816.2 629.3 814 640 C811.8 650.7 808.6 661.7 807.5 666" fill="none" stroke="#c9ccd9" stroke-width="6.6" />
<path d="M795 533 C798.2 533.2 808.8 532.2 814 534.5 C819.2 536.8 824 540.8 826 547 C828 553.2 826.8 562.8 826 572 C825.2 581.2 823 590.7 821 602 C819 613.3 816.2 629.3 814 640 C811.8 650.7 808.6 661.7 807.5 666" fill="none" stroke="#e9e9f1" stroke-width="5.2" />
<polyline points="615.5,488.8 642.9,478" fill="none" stroke="#d9ccb4" stroke-width="0.9" />
<polyline points="620.5,497.8 645.1,487.6" fill="none" stroke="#d9ccb4" stroke-width="0.9" />
<polyline points="625.5,506.8 647.2,497.2" fill="none" stroke="#d9ccb4" stroke-width="0.9" />
<polyline points="630.4,515.7 649.4,506.8" fill="none" stroke="#d9ccb4" stroke-width="0.9" />
<polyline points="635.4,524.7 651.5,516.4" fill="none" stroke="#d9ccb4" stroke-width="0.9" />
<polyline points="640.4,533.7 653.7,526" fill="none" stroke="#d9ccb4" stroke-width="0.9" />
<polyline points="731.3,564.2 762.1,571.6" fill="none" stroke="#d9ccb4" stroke-width="0.9" />
<polyline points="729.9,570.6 760.7,578.2" fill="none" stroke="#d9ccb4" stroke-width="0.9" />
<polyline points="728.5,577 759.3,584.8" fill="none" stroke="#d9ccb4" stroke-width="0.9" />
<polyline points="727.1,583.4 757.9,591.4" fill="none" stroke="#d9ccb4" stroke-width="0.9" />
<polyline points="725.7,589.9 756.5,598.1" fill="none" stroke="#d9ccb4" stroke-width="0.9" />
<polyline points="769.9,581.5 791.3,586.4" fill="none" stroke="#d9ccb4" stroke-width="0.9" />
<polyline points="768.1,588.6 789.4,593.4" fill="none" stroke="#d9ccb4" stroke-width="0.9" />
<polyline points="766.4,595.7 787.6,600.4" fill="none" stroke="#d9ccb4" stroke-width="0.9" />
<polyline points="764.6,602.9 785.8,607.5" fill="none" stroke="#d9ccb4" stroke-width="0.9" />
<polyline points="762.8,610 784,614.5" fill="none" stroke="#d9ccb4" stroke-width="0.9" />
<polyline points="761,617.1 782.2,621.5" fill="none" stroke="#d9ccb4" stroke-width="0.9" />
<polygon points="749,563 756,564.5 755.3,568 748.3,566.5" fill="#e3d2b5" />
<polyline points="678.4,567.2 672.6,595.1" fill="none" stroke="#d9ccb4" stroke-width="0.9" />
<polyline points="684.9,568.3 679.3,596.5" fill="none" stroke="#d9ccb4" stroke-width="0.9" />
<polyline points="691.3,569.3 686,597.8" fill="none" stroke="#d9ccb4" stroke-width="0.9" />
<polyline points="697.7,570.3 692.8,599.1" fill="none" stroke="#d9ccb4" stroke-width="0.9" />
<polyline points="704.2,571.4 699.5,600.5" fill="none" stroke="#d9ccb4" stroke-width="0.9" />
<polyline points="632.6,553.5 626.7,581.3" fill="none" stroke="#d9ccb4" stroke-width="0.9" />
<polyline points="639.2,555.2 633.6,583" fill="none" stroke="#d9ccb4" stroke-width="0.9" />
<polyline points="645.9,556.9 640.6,584.6" fill="none" stroke="#d9ccb4" stroke-width="0.9" />
<path d="M873 720.2 v3.6 M871.8 721.3 h2.4" stroke="#5b6b50" stroke-width="0.7" fill="none"/>
<path d="M884 733.2 v3.6 M882.8 734.3 h2.4" stroke="#5b6b50" stroke-width="0.7" fill="none"/>
<path d="M863 736.2 v3.6 M861.8 737.3 h2.4" stroke="#5b6b50" stroke-width="0.7" fill="none"/>
<path d="M872 756.2 v3.6 M870.8 757.3 h2.4" stroke="#5b6b50" stroke-width="0.7" fill="none"/>
<path d="M905 731.2 v3.6 M903.8 732.3 h2.4" stroke="#5b6b50" stroke-width="0.7" fill="none"/>
<path d="M921 726.2 v3.6 M919.8 727.3 h2.4" stroke="#5b6b50" stroke-width="0.7" fill="none"/>
<path d="M913 740.2 v3.6 M911.8 741.3 h2.4" stroke="#5b6b50" stroke-width="0.7" fill="none"/>
<path d="M899 748.2 v3.6 M897.8 749.3 h2.4" stroke="#5b6b50" stroke-width="0.7" fill="none"/>
<path d="M908 766.2 v3.6 M906.8 767.3 h2.4" stroke="#5b6b50" stroke-width="0.7" fill="none"/>
<path d="M862 778.2 v3.6 M860.8 779.3 h2.4" stroke="#5b6b50" stroke-width="0.7" fill="none"/>
<path d="M873 784.2 v3.6 M871.8 785.3 h2.4" stroke="#5b6b50" stroke-width="0.7" fill="none"/>
<path d="M899 779.2 v3.6 M897.8 780.3 h2.4" stroke="#5b6b50" stroke-width="0.7" fill="none"/>
<path d="M908 786.2 v3.6 M906.8 787.3 h2.4" stroke="#5b6b50" stroke-width="0.7" fill="none"/>
<path d="M866 794.2 v3.6 M864.8 795.3 h2.4" stroke="#5b6b50" stroke-width="0.7" fill="none"/>
<path d="M897 766.2 v3.6 M895.8 767.3 h2.4" stroke="#5b6b50" stroke-width="0.7" fill="none"/>
<polygon points="872,705 881,707 880,714 871,712" fill="#e0cfb3" />
<polygon points="892,712 903,714 901,728 890,726" fill="#e0cfb3" />
<polygon points="918,714 928,716 927,722 917,720" fill="#e0cfb3" />
<polygon points="940,612 945,612 944,632 931,630 931,626 939,627" fill="#e3d2b5" />
<polygon points="948,647 966,650 965,657 947,654" fill="#e3d2b5" />
<polygon points="914,676 918,676 918,680 914,680" fill="#e3d2b5" />
<polygon points="962,680 984,683 983,688 961,685" fill="#e3d2b5" />
<polygon points="960,687 966,688 965,694 959,693" fill="#e3d2b5" />
<polygon points="967,693 980,695 979,702 966,700" fill="#e3d2b5" />
<polygon points="945,659 951,660 950,668 944,667" fill="#e6e6ec" />
<polygon points="953,660 960,661 959,669 952,668" fill="#e6e6ec" />
<polygon points="943,671 950,672 948,688 941,687" fill="#e6e6ec" />
<polygon points="953,672 958,673 957,683 952,682" fill="#e6e6ec" />
<polygon points="1117,307 1133,305 1134,312 1124,313 1125,326 1132,325 1131,321 1136,320 1138,332 1121,334" fill="#e3d2b5" />
<polygon points="1128,292 1134,291 1135,300 1129,301" fill="#e3d2b5" />
<polygon points="1109,255 1114,255 1114,282 1109,282" fill="#e3d2b5" />
<polygon points="684,456 690,454 694,464 688,466" fill="#e3d2b5" />
<polygon points="698,452 703,450 707,461 702,463" fill="#e3d2b5" />
<polygon points="686,470 690,468 692,472 688,474" fill="#e3d2b5" />
<polygon points="693,477 702,476 703,480 694,481" fill="#e3d2b5" />
<polygon points="695,484 700,483 702,492 697,493" fill="#e3d2b5" />
<polygon points="703,482 708,481 709,488 704,489" fill="#e3d2b5" />
<polyline points="712,438 727,433" fill="none" stroke="#cfccc6" stroke-width="2" />
<polyline points="713.6,441.2 728.6,436.2" fill="none" stroke="#cfccc6" stroke-width="2" />
<polyline points="715.2,444.4 730.2,439.4" fill="none" stroke="#cfccc6" stroke-width="2" />
<polyline points="716.8,447.6 731.8,442.6" fill="none" stroke="#cfccc6" stroke-width="2" />
<polyline points="718.4,450.8 733.4,445.8" fill="none" stroke="#cfccc6" stroke-width="2" />
<polyline points="720,454 735,449" fill="none" stroke="#cfccc6" stroke-width="2" />
<path d="M541.500 485 L537.500 444.500 Q537.300 442.800 539 442.600 L560.500 440.600 Q562.200 440.500 562.400 442.200 L565.500 479" fill="none" stroke="#b9bfd2" stroke-width="5" stroke-linejoin="round"/>
<path d="M541.500 485 L537.500 444.500 Q537.300 442.800 539 442.600 L560.500 440.600 Q562.200 440.500 562.400 442.200 L565.500 479" fill="none" stroke="#ececf3" stroke-width="3.2" stroke-linejoin="round"/>
<path d="M408 281 C417 279.7 443.3 274.5 462 273 C480.7 271.5 501.2 273.8 520 272 C538.8 270.2 561.7 265.7 575 262 C588.3 258.3 595.8 252 600 250" fill="none" stroke="#b0b8ce" stroke-width="3" stroke-linejoin="round"/>
<path d="M576 262 C577.3 266.7 579.5 279 584 290 C588.5 301 596.8 311 603 328 C609.2 345 616 374.7 621 392 C626 409.3 629.7 421 633 432 C636.3 443 639.7 453.7 641 458" fill="none" stroke="#b0b8ce" stroke-width="3" stroke-linejoin="round"/>
<path d="M635 460 C637.2 462 644.5 467 648 472 C651.5 477 654.1 482.8 656 490 C657.9 497.2 659 506.7 659.5 515 C660 523.3 659.9 533.2 658.7 540 C657.5 546.8 655.2 546 652.5 556 C649.8 566 645.2 590.7 642.5 600 C639.8 609.3 637.1 610 636 612" fill="none" stroke="#b0b8ce" stroke-width="3" stroke-linejoin="round"/>
<path d="M420 297 L424 340" fill="none" stroke="#b0b8ce" stroke-width="3" stroke-linejoin="round"/>
<path d="M447 297 L449 310" fill="none" stroke="#b0b8ce" stroke-width="3" stroke-linejoin="round"/>
<path d="M408 460 C411.7 463 424.7 471.3 430 478 C435.3 484.7 439 494.3 440 500 C441 505.7 436.7 510 436 512" fill="none" stroke="#b0b8ce" stroke-width="3" stroke-linejoin="round"/>
<path d="M408 470 L430 465" fill="none" stroke="#b0b8ce" stroke-width="3" stroke-linejoin="round"/>
<path d="M408 516 C413.3 518.7 429.7 526.3 440 532 C450.3 537.7 456.7 542.7 470 550 C483.3 557.3 509.2 569.7 520 576 C530.8 582.3 532.5 586 535 588" fill="none" stroke="#b0b8ce" stroke-width="3" stroke-linejoin="round"/>
<path d="M440 545 C441 550 441.7 568.8 446 575 C450.3 581.2 462 577.8 466 582 C470 586.2 470 587 470 600 C470 613 467.3 643.3 466 660 C464.7 676.7 465.3 683.3 462 700 C458.7 716.7 452.2 743.3 446 760 C439.8 776.7 428.5 793.3 425 800" fill="none" stroke="#b0b8ce" stroke-width="3" stroke-linejoin="round"/>
<path d="M470 585 L505 600 L495 625 L470 640" fill="none" stroke="#b0b8ce" stroke-width="3" stroke-linejoin="round"/>
<path d="M487 592 L497 615" fill="none" stroke="#b0b8ce" stroke-width="3" stroke-linejoin="round"/>
<path d="M478 628 L500 624 L518 632" fill="none" stroke="#b0b8ce" stroke-width="3" stroke-linejoin="round"/>
<path d="M466 648 L484 668" fill="none" stroke="#b0b8ce" stroke-width="3" stroke-linejoin="round"/>
<path d="M540 588 C536.7 596.7 525 629.3 520 640 C515 650.7 511.7 650 510 652" fill="none" stroke="#b0b8ce" stroke-width="3" stroke-linejoin="round"/>
<path d="M498 668 C493.3 678.3 477.2 711.3 470 730 C462.8 748.7 459.2 768.3 455 780 C450.8 791.7 446.7 796.7 445 800" fill="none" stroke="#b0b8ce" stroke-width="3" stroke-linejoin="round"/>
<path d="M520 640 L545 648" fill="none" stroke="#b0b8ce" stroke-width="3" stroke-linejoin="round"/>
<path d="M566 485 C565 490.8 563 509.8 560 520 C557 530.2 550 541.7 548 546" fill="none" stroke="#b0b8ce" stroke-width="3" stroke-linejoin="round"/>
<path d="M560 520 C565 520.3 583.3 524.5 590 522 C596.7 519.5 598.3 507.8 600 505" fill="none" stroke="#b0b8ce" stroke-width="3" stroke-linejoin="round"/>
<path d="M640 445 C648.3 442.8 680 433.3 690 432 C700 430.7 698.3 436.2 700 437" fill="none" stroke="#b0b8ce" stroke-width="3" stroke-linejoin="round"/>
<path d="M655 458 C654.2 460 652.5 468 650 470 C647.5 472 641.7 470 640 470" fill="none" stroke="#b0b8ce" stroke-width="3" stroke-linejoin="round"/>
<path d="M612 520 C616.7 524.2 625.3 536.7 640 545 C654.7 553.3 687.3 565.5 700 570 C712.7 574.5 711 572.7 716 572 C721 571.3 727.7 567 730 566" fill="none" stroke="#b0b8ce" stroke-width="3" stroke-linejoin="round"/>
<path d="M610 600 C618.3 602.8 642.5 610.8 660 617 C677.5 623.2 693.3 629.8 715 637 C736.7 644.2 762.5 652 790 660 C817.5 668 861.7 680.3 880 685 C898.3 689.7 896.7 687.5 900 688" fill="none" stroke="#b0b8ce" stroke-width="3" stroke-linejoin="round"/>
<path d="M725.5 601 C724.2 603.3 719.8 609 718 615 C716.2 621 715.1 633.3 714.5 637" fill="none" stroke="#b0b8ce" stroke-width="3" stroke-linejoin="round"/>
<path d="M787.5 628 L782.5 656" fill="none" stroke="#b0b8ce" stroke-width="3" stroke-linejoin="round"/>
<path d="M900 687.5 C910 689.6 940.5 696.7 960 700 C979.5 703.3 1003.7 707.5 1017 707.5 C1030.3 707.5 1032 702.3 1040 700 C1048 697.7 1060.8 694.8 1065 693.7" fill="none" stroke="#b0b8ce" stroke-width="3" stroke-linejoin="round"/>
<path d="M1072.5 700 C1077.1 707.1 1092.1 734.2 1100 742.5 C1107.9 750.8 1115.8 744.6 1120 750 C1124.2 755.4 1121.7 766.7 1125 775 C1128.3 783.3 1137.5 795.8 1140 800" fill="none" stroke="#b0b8ce" stroke-width="3" stroke-linejoin="round"/>
<path d="M1130 631 L1168.7 648.7" fill="none" stroke="#b0b8ce" stroke-width="3" stroke-linejoin="round"/>
<path d="M937.5 707.5 C936.4 714.2 927.7 734.6 931 747.5 C934.3 760.4 953.1 778.8 957.5 785" fill="none" stroke="#b0b8ce" stroke-width="3" stroke-linejoin="round"/>
<path d="M878 705 C879.2 706.8 878.3 713.2 885 716 C891.7 718.8 911.3 722.3 918 722 C924.7 721.7 923.8 715.3 925 714" fill="none" stroke="#b0b8ce" stroke-width="3" stroke-linejoin="round"/>
<path d="M900 712 L899 722" fill="none" stroke="#b0b8ce" stroke-width="3" stroke-linejoin="round"/>
<path d="M1105 246 C1102.5 253.3 1093.3 281 1090 290 C1086.7 299 1085.8 298.3 1085 300" fill="none" stroke="#b0b8ce" stroke-width="3" stroke-linejoin="round"/>
<path d="M1090 290 C1093 292.5 1104 296.7 1108 305 C1112 313.3 1113 334.2 1114 340" fill="none" stroke="#b0b8ce" stroke-width="3" stroke-linejoin="round"/>
<path d="M1150.5 355 C1151.8 360 1153.8 372.5 1158 385 C1162.2 397.5 1171 415.8 1176 430 C1181 444.2 1184 458.3 1188 470 C1192 481.7 1198 495 1200 500" fill="none" stroke="#b0b8ce" stroke-width="3" stroke-linejoin="round"/>
<path d="M1146 244 C1148 245.5 1154.8 250.2 1158 253 C1161.2 255.8 1161.7 258.2 1165 261 C1168.3 263.8 1174.5 267.3 1178 270 C1181.5 272.7 1183.3 274 1186 277 C1188.7 280 1191.3 284.2 1194 288 C1196.7 291.8 1200.7 298 1202 300" fill="none" stroke="#b0b8ce" stroke-width="3" stroke-linejoin="round"/>
<path d="M408 648 L420 640" fill="none" stroke="#b0b8ce" stroke-width="3" stroke-linejoin="round"/>
<path d="M408 281 C417 279.7 443.3 274.5 462 273 C480.7 271.5 501.2 273.8 520 272 C538.8 270.2 561.7 265.7 575 262 C588.3 258.3 595.8 252 600 250" fill="none" stroke="#e4e7f0" stroke-width="1.3" stroke-linejoin="round"/>
<path d="M576 262 C577.3 266.7 579.5 279 584 290 C588.5 301 596.8 311 603 328 C609.2 345 616 374.7 621 392 C626 409.3 629.7 421 633 432 C636.3 443 639.7 453.7 641 458" fill="none" stroke="#e4e7f0" stroke-width="1.3" stroke-linejoin="round"/>
<path d="M635 460 C637.2 462 644.5 467 648 472 C651.5 477 654.1 482.8 656 490 C657.9 497.2 659 506.7 659.5 515 C660 523.3 659.9 533.2 658.7 540 C657.5 546.8 655.2 546 652.5 556 C649.8 566 645.2 590.7 642.5 600 C639.8 609.3 637.1 610 636 612" fill="none" stroke="#e4e7f0" stroke-width="1.3" stroke-linejoin="round"/>
<path d="M420 297 L424 340" fill="none" stroke="#e4e7f0" stroke-width="1.3" stroke-linejoin="round"/>
<path d="M447 297 L449 310" fill="none" stroke="#e4e7f0" stroke-width="1.3" stroke-linejoin="round"/>
<path d="M408 460 C411.7 463 424.7 471.3 430 478 C435.3 484.7 439 494.3 440 500 C441 505.7 436.7 510 436 512" fill="none" stroke="#e4e7f0" stroke-width="1.3" stroke-linejoin="round"/>
<path d="M408 470 L430 465" fill="none" stroke="#e4e7f0" stroke-width="1.3" stroke-linejoin="round"/>
<path d="M408 516 C413.3 518.7 429.7 526.3 440 532 C450.3 537.7 456.7 542.7 470 550 C483.3 557.3 509.2 569.7 520 576 C530.8 582.3 532.5 586 535 588" fill="none" stroke="#e4e7f0" stroke-width="1.3" stroke-linejoin="round"/>
<path d="M440 545 C441 550 441.7 568.8 446 575 C450.3 581.2 462 577.8 466 582 C470 586.2 470 587 470 600 C470 613 467.3 643.3 466 660 C464.7 676.7 465.3 683.3 462 700 C458.7 716.7 452.2 743.3 446 760 C439.8 776.7 428.5 793.3 425 800" fill="none" stroke="#e4e7f0" stroke-width="1.3" stroke-linejoin="round"/>
<path d="M470 585 L505 600 L495 625 L470 640" fill="none" stroke="#e4e7f0" stroke-width="1.3" stroke-linejoin="round"/>
<path d="M487 592 L497 615" fill="none" stroke="#e4e7f0" stroke-width="1.3" stroke-linejoin="round"/>
<path d="M478 628 L500 624 L518 632" fill="none" stroke="#e4e7f0" stroke-width="1.3" stroke-linejoin="round"/>
<path d="M466 648 L484 668" fill="none" stroke="#e4e7f0" stroke-width="1.3" stroke-linejoin="round"/>
<path d="M540 588 C536.7 596.7 525 629.3 520 640 C515 650.7 511.7 650 510 652" fill="none" stroke="#e4e7f0" stroke-width="1.3" stroke-linejoin="round"/>
<path d="M498 668 C493.3 678.3 477.2 711.3 470 730 C462.8 748.7 459.2 768.3 455 780 C450.8 791.7 446.7 796.7 445 800" fill="none" stroke="#e4e7f0" stroke-width="1.3" stroke-linejoin="round"/>
<path d="M520 640 L545 648" fill="none" stroke="#e4e7f0" stroke-width="1.3" stroke-linejoin="round"/>
<path d="M566 485 C565 490.8 563 509.8 560 520 C557 530.2 550 541.7 548 546" fill="none" stroke="#e4e7f0" stroke-width="1.3" stroke-linejoin="round"/>
<path d="M560 520 C565 520.3 583.3 524.5 590 522 C596.7 519.5 598.3 507.8 600 505" fill="none" stroke="#e4e7f0" stroke-width="1.3" stroke-linejoin="round"/>
<path d="M640 445 C648.3 442.8 680 433.3 690 432 C700 430.7 698.3 436.2 700 437" fill="none" stroke="#e4e7f0" stroke-width="1.3" stroke-linejoin="round"/>
<path d="M655 458 C654.2 460 652.5 468 650 470 C647.5 472 641.7 470 640 470" fill="none" stroke="#e4e7f0" stroke-width="1.3" stroke-linejoin="round"/>
<path d="M612 520 C616.7 524.2 625.3 536.7 640 545 C654.7 553.3 687.3 565.5 700 570 C712.7 574.5 711 572.7 716 572 C721 571.3 727.7 567 730 566" fill="none" stroke="#e4e7f0" stroke-width="1.3" stroke-linejoin="round"/>
<path d="M610 600 C618.3 602.8 642.5 610.8 660 617 C677.5 623.2 693.3 629.8 715 637 C736.7 644.2 762.5 652 790 660 C817.5 668 861.7 680.3 880 685 C898.3 689.7 896.7 687.5 900 688" fill="none" stroke="#e4e7f0" stroke-width="1.3" stroke-linejoin="round"/>
<path d="M725.5 601 C724.2 603.3 719.8 609 718 615 C716.2 621 715.1 633.3 714.5 637" fill="none" stroke="#e4e7f0" stroke-width="1.3" stroke-linejoin="round"/>
<path d="M787.5 628 L782.5 656" fill="none" stroke="#e4e7f0" stroke-width="1.3" stroke-linejoin="round"/>
<path d="M900 687.5 C910 689.6 940.5 696.7 960 700 C979.5 703.3 1003.7 707.5 1017 707.5 C1030.3 707.5 1032 702.3 1040 700 C1048 697.7 1060.8 694.8 1065 693.7" fill="none" stroke="#e4e7f0" stroke-width="1.3" stroke-linejoin="round"/>
<path d="M1072.5 700 C1077.1 707.1 1092.1 734.2 1100 742.5 C1107.9 750.8 1115.8 744.6 1120 750 C1124.2 755.4 1121.7 766.7 1125 775 C1128.3 783.3 1137.5 795.8 1140 800" fill="none" stroke="#e4e7f0" stroke-width="1.3" stroke-linejoin="round"/>
<path d="M1130 631 L1168.7 648.7" fill="none" stroke="#e4e7f0" stroke-width="1.3" stroke-linejoin="round"/>
<path d="M937.5 707.5 C936.4 714.2 927.7 734.6 931 747.5 C934.3 760.4 953.1 778.8 957.5 785" fill="none" stroke="#e4e7f0" stroke-width="1.3" stroke-linejoin="round"/>
<path d="M878 705 C879.2 706.8 878.3 713.2 885 716 C891.7 718.8 911.3 722.3 918 722 C924.7 721.7 923.8 715.3 925 714" fill="none" stroke="#e4e7f0" stroke-width="1.3" stroke-linejoin="round"/>
<path d="M900 712 L899 722" fill="none" stroke="#e4e7f0" stroke-width="1.3" stroke-linejoin="round"/>
<path d="M1105 246 C1102.5 253.3 1093.3 281 1090 290 C1086.7 299 1085.8 298.3 1085 300" fill="none" stroke="#e4e7f0" stroke-width="1.3" stroke-linejoin="round"/>
<path d="M1090 290 C1093 292.5 1104 296.7 1108 305 C1112 313.3 1113 334.2 1114 340" fill="none" stroke="#e4e7f0" stroke-width="1.3" stroke-linejoin="round"/>
<path d="M1150.5 355 C1151.8 360 1153.8 372.5 1158 385 C1162.2 397.5 1171 415.8 1176 430 C1181 444.2 1184 458.3 1188 470 C1192 481.7 1198 495 1200 500" fill="none" stroke="#e4e7f0" stroke-width="1.3" stroke-linejoin="round"/>
<path d="M1146 244 C1148 245.5 1154.8 250.2 1158 253 C1161.2 255.8 1161.7 258.2 1165 261 C1168.3 263.8 1174.5 267.3 1178 270 C1181.5 272.7 1183.3 274 1186 277 C1188.7 280 1191.3 284.2 1194 288 C1196.7 291.8 1200.7 298 1202 300" fill="none" stroke="#e4e7f0" stroke-width="1.3" stroke-linejoin="round"/>
<path d="M408 648 L420 640" fill="none" stroke="#e4e7f0" stroke-width="1.3" stroke-linejoin="round"/>
<path d="M668 505 C668.7 503.7 669.3 499.3 672 497 C674.7 494.7 680.3 491.2 684 491 C687.7 490.8 692.3 495.2 694 496" fill="none" stroke="#d6cfbd" stroke-width="4" stroke-linecap="butt" stroke-linejoin="round"/>
<path d="M688 493 L686 512" fill="none" stroke="#d6cfbd" stroke-width="4" stroke-linecap="round" stroke-linejoin="round"/>
<path d="M408 259 C418.3 259.1 451.3 259.2 470 259.5 C488.7 259.8 507 261.2 520 261 C533 260.8 540.2 259.6 548 258 C555.8 256.4 561.7 253.9 567 251.6 C572.3 249.3 577.8 245.3 580 244" fill="none" stroke="#d6cfbd" stroke-width="6.8" stroke-linecap="butt" stroke-linejoin="round"/>
<path d="M421 380 C424.2 378.7 434.3 375.3 440 372 C445.7 368.7 447.2 364.2 455 360 C462.8 355.8 475.3 354.5 486.8 347 C498.3 339.5 510.9 324.2 524 315 C537.1 305.8 554.8 296.5 565.5 292 C576.2 287.5 584.2 288.7 588 288" fill="none" stroke="#d6cfbd" stroke-width="7.2" stroke-linecap="butt" stroke-linejoin="round"/>
<path d="M408 352.5 C414.3 353.1 437.7 355 446 356 C454.3 357 456 358.1 458 358.5" fill="none" stroke="#d6cfbd" stroke-width="6.6" stroke-linecap="butt" stroke-linejoin="round"/>
<path d="M505.5 328.5 C504.2 323.8 500.2 308.1 498 300 C495.8 291.9 495.2 284.3 492 280 C488.8 275.7 481.2 275 479 274" fill="none" stroke="#d6cfbd" stroke-width="5.6" stroke-linecap="butt" stroke-linejoin="round"/>
<path d="M486.8 347 L482 420 L477 501" fill="none" stroke="#d6cfbd" stroke-width="5.8" stroke-linecap="butt" stroke-linejoin="round"/>
<path d="M448 297.5 C447.8 302.1 447.6 316.6 447 325 C446.4 333.4 444.9 344.2 444.5 348" fill="none" stroke="#d6cfbd" stroke-width="5.6" stroke-linecap="butt" stroke-linejoin="round"/>
<path d="M434 510.4 L513 492.6 L608 468 L648 454 L698.7 435.6" fill="none" stroke="#d6cfbd" stroke-width="8" stroke-linecap="butt" stroke-linejoin="round"/>
<path d="M434 461.6 L434 510" fill="none" stroke="#d6cfbd" stroke-width="5.6" stroke-linecap="butt" stroke-linejoin="round"/>
<path d="M408 488 C410 488.7 415.7 490 420 492 C424.3 494 431.7 498.7 434 500" fill="none" stroke="#d6cfbd" stroke-width="5.6" stroke-linecap="butt" stroke-linejoin="round"/>
<path d="M503.6 509 L531.8 509" fill="none" stroke="#d6cfbd" stroke-width="6.1" stroke-linecap="butt" stroke-linejoin="round"/>
<path d="M517 493 L515 516" fill="none" stroke="#d6cfbd" stroke-width="5.6" stroke-linecap="butt" stroke-linejoin="round"/>
<path d="M575 244 C577.2 251.3 582.5 274.5 588 288 C593.5 301.5 601.7 308 608 325 C614.3 342 620.9 372.5 626 390 C631.1 407.5 634.5 418.7 638.7 430 C642.9 441.3 647.6 449.7 651 458 C654.4 466.3 656.7 470.5 659 480 C661.3 489.5 664.2 505 665 515 C665.8 525 665.3 530.8 664 540 C662.7 549.2 660.2 559 657 570 C653.8 581 647.7 598.7 645 606 C642.3 613.3 641.7 612.7 641 614" fill="none" stroke="#d6cfbd" stroke-width="7" stroke-linecap="butt" stroke-linejoin="round"/>
<path d="M598 320 C595 320.5 584.2 321.8 580 323 C575.8 324.2 574.5 325.3 573 327 C571.5 328.7 567.8 321.5 571 333 C574.2 344.5 587.8 384.7 592 396 C596.2 407.3 594.3 400 596 401 C597.7 402 598.2 402.5 602 402 C605.8 401.5 616.2 398.7 619 398" fill="none" stroke="#d6cfbd" stroke-width="4.1" stroke-linecap="butt" stroke-linejoin="round"/>
<path d="M584 326 C587.7 337.7 601.5 378.3 606 396 C610.5 413.7 610.2 426 611 432" fill="none" stroke="#d6cfbd" stroke-width="3.9" stroke-linecap="butt" stroke-linejoin="round"/>
<path d="M586.198 333 L596.698 330" fill="none" stroke="#d6cfbd" stroke-width="3.7" stroke-linecap="butt" stroke-linejoin="round"/>
<path d="M590.28 346 L600.78 343" fill="none" stroke="#d6cfbd" stroke-width="3.7" stroke-linecap="butt" stroke-linejoin="round"/>
<path d="M594.048 358 L604.548 355" fill="none" stroke="#d6cfbd" stroke-width="3.7" stroke-linecap="butt" stroke-linejoin="round"/>
<path d="M597.816 370 L608.316 367" fill="none" stroke="#d6cfbd" stroke-width="3.7" stroke-linecap="butt" stroke-linejoin="round"/>
<path d="M601.898 383 L612.398 380" fill="none" stroke="#d6cfbd" stroke-width="3.7" stroke-linecap="butt" stroke-linejoin="round"/>
<path d="M604 410 L627 407.5" fill="none" stroke="#d6cfbd" stroke-width="3.8" stroke-linecap="butt" stroke-linejoin="round"/>
<path d="M608 423 L627 420" fill="none" stroke="#d6cfbd" stroke-width="3.8" stroke-linecap="butt" stroke-linejoin="round"/>
<path d="M596 296 L606 293.5 L612 310" fill="none" stroke="#d6cfbd" stroke-width="3.9" stroke-linecap="round" stroke-linejoin="round"/>
<path d="M400 509 C401.3 509.8 398.3 507.9 408 513.7 C417.7 519.5 441.3 533.9 458 543.7 C474.7 553.5 491.3 564.4 508 572.5 C524.7 580.6 541.3 586.2 558 592.5 C574.7 598.8 591.3 604.6 608 610 C624.7 615.4 641.3 620.2 658 625 C674.7 629.8 697.3 635 708 638.7 C718.7 642.4 705 641.8 722 647 C739 652.2 780.3 661.8 810 670 C839.7 678.2 875 690 900 696 C925 702 940 702.4 960 706 C980 709.6 1010 715.6 1020 717.5" fill="none" stroke="#d6cfbd" stroke-width="11.4" stroke-linecap="butt" stroke-linejoin="round"/>
<path d="M620.5 615 L608 672.5" fill="none" stroke="#d6cfbd" stroke-width="6.2" stroke-linecap="round" stroke-linejoin="round"/>
<path d="M523 582.5 C521.2 588.8 515.2 607.8 512 620 C508.8 632.2 508.8 642.7 504 656 C499.2 669.3 493.6 676 483 700 C472.4 724 447.6 783.3 440.5 800" fill="none" stroke="#d6cfbd" stroke-width="7" stroke-linecap="butt" stroke-linejoin="round"/>
<path d="M504 656 L470 662 L436.7 666" fill="none" stroke="#d6cfbd" stroke-width="6.6" stroke-linecap="butt" stroke-linejoin="round"/>
<path d="M536.7 586 C535.2 595 531.1 621 528 640 C524.9 659 521.8 680 518 700 C514.2 720 507.2 750 505 760" fill="none" stroke="#d6cfbd" stroke-width="3.2" stroke-linecap="butt" stroke-linejoin="round"/>
<path d="M523 700 L500 800" fill="none" stroke="#d6cfbd" stroke-width="3.2" stroke-linecap="butt" stroke-linejoin="round"/>
<path d="M720 657.5 C716.7 671.2 705.8 716.2 700 740 C694.2 763.8 687.5 790 685 800" fill="none" stroke="#d6cfbd" stroke-width="6.4" stroke-linecap="butt" stroke-linejoin="round"/>
<path d="M437 742 L465 750 L493 757" fill="none" stroke="#d6cfbd" stroke-width="5.6" stroke-linecap="butt" stroke-linejoin="round"/>
<path d="M758.5 607 C758.3 608.5 759.1 614 757.5 616 C755.9 618 752.8 618.5 749 619 C745.2 619.5 738.2 618.3 735 619 C731.8 619.7 730.8 619.5 729.5 623 C728.2 626.5 727.4 637.2 727 640" fill="none" stroke="#d6cfbd" stroke-width="4.2" stroke-linecap="butt" stroke-linejoin="round"/>
<path d="M708 700 L683 800" fill="none" stroke="#d6cfbd" stroke-width="1.7" stroke-linecap="butt" stroke-linejoin="round"/>
<path d="M1066 351.5 L1120 342 L1150 337 L1152.5 356 L1175 421 L1182.5 446 L1200 500" fill="none" stroke="#d6cfbd" stroke-width="6.2" stroke-linecap="butt" stroke-linejoin="round"/>
<path d="M1047.5 720 C1052.1 722.1 1065 726.2 1075 732.5 C1085 738.8 1097.5 746.2 1107.5 757.5 C1117.5 768.8 1130.4 792.9 1135 800" fill="none" stroke="#d6cfbd" stroke-width="8.2" stroke-linecap="butt" stroke-linejoin="round"/>
<path d="M1030 775 C1031.7 769.2 1036.7 747.5 1040 740 C1043.3 732.5 1046.2 730 1050 730 C1053.8 730 1056.7 734.6 1062.5 740 C1068.3 745.4 1077.5 759.6 1085 762.5 C1092.5 765.4 1099.2 760.8 1107.5 757.5 C1115.8 754.2 1125.4 750.8 1135 742.5 C1144.6 734.2 1156.7 718.8 1165 707.5 C1173.3 696.2 1180.2 685 1185 675 C1189.8 665 1191.2 654.6 1193.7 647.5 C1196.2 640.4 1199 635 1200 632.5" fill="none" stroke="#d6cfbd" stroke-width="6" stroke-linecap="butt" stroke-linejoin="round"/>
<path d="M1135 740 L1200 750" fill="none" stroke="#d6cfbd" stroke-width="5.6" stroke-linecap="butt" stroke-linejoin="round"/>
<path d="M1152.5 701 L1162.5 706" fill="none" stroke="#d6cfbd" stroke-width="5.6" stroke-linecap="round" stroke-linejoin="round"/>
<path d="M1170 650 L1173.7 641 L1187.5 645" fill="none" stroke="#d6cfbd" stroke-width="5.2" stroke-linecap="butt" stroke-linejoin="round"/>
<path d="M1135 585 C1136 587.2 1140.2 593 1141 598 C1141.8 603 1140.2 612.2 1140 615" fill="none" stroke="#d6cfbd" stroke-width="4.6" stroke-linecap="butt" stroke-linejoin="round"/>
<path d="M1103 349 C1102.2 347.2 1099.5 341.5 1098 338 C1096.5 334.5 1094.2 330.7 1094 328 C1093.8 325.3 1095.5 322.7 1097 322 C1098.5 321.3 1101.8 322.3 1103 324 C1104.2 325.7 1104 327.8 1104 332 C1104 336.2 1103.2 346.2 1103 349" fill="none" stroke="#d6cfbd" stroke-width="3.8" stroke-linecap="butt" stroke-linejoin="round"/>
<path d="M668 505 C668.7 503.7 669.3 499.3 672 497 C674.7 494.7 680.3 491.2 684 491 C687.7 490.8 692.3 495.2 694 496" fill="none" stroke="#fff" stroke-width="2.4" stroke-linecap="butt" stroke-linejoin="round"/>
<path d="M688 493 L686 512" fill="none" stroke="#fff" stroke-width="2.4" stroke-linecap="round" stroke-linejoin="round"/>
<path d="M408 259 C418.3 259.1 451.3 259.2 470 259.5 C488.7 259.8 507 261.2 520 261 C533 260.8 540.2 259.6 548 258 C555.8 256.4 561.7 253.9 567 251.6 C572.3 249.3 577.8 245.3 580 244" fill="none" stroke="#fff" stroke-width="5.2" stroke-linecap="butt" stroke-linejoin="round"/>
<path d="M421 380 C424.2 378.7 434.3 375.3 440 372 C445.7 368.7 447.2 364.2 455 360 C462.8 355.8 475.3 354.5 486.8 347 C498.3 339.5 510.9 324.2 524 315 C537.1 305.8 554.8 296.5 565.5 292 C576.2 287.5 584.2 288.7 588 288" fill="none" stroke="#fff" stroke-width="5.6" stroke-linecap="butt" stroke-linejoin="round"/>
<path d="M408 352.5 C414.3 353.1 437.7 355 446 356 C454.3 357 456 358.1 458 358.5" fill="none" stroke="#fff" stroke-width="5" stroke-linecap="butt" stroke-linejoin="round"/>
<path d="M505.5 328.5 C504.2 323.8 500.2 308.1 498 300 C495.8 291.9 495.2 284.3 492 280 C488.8 275.7 481.2 275 479 274" fill="none" stroke="#fff" stroke-width="4" stroke-linecap="butt" stroke-linejoin="round"/>
<path d="M486.8 347 L482 420 L477 501" fill="none" stroke="#fff" stroke-width="4.2" stroke-linecap="butt" stroke-linejoin="round"/>
<path d="M448 297.5 C447.8 302.1 447.6 316.6 447 325 C446.4 333.4 444.9 344.2 444.5 348" fill="none" stroke="#fff" stroke-width="4" stroke-linecap="butt" stroke-linejoin="round"/>
<path d="M434 510.4 L513 492.6 L608 468 L648 454 L698.7 435.6" fill="none" stroke="#fff" stroke-width="6.4" stroke-linecap="butt" stroke-linejoin="round"/>
<path d="M434 461.6 L434 510" fill="none" stroke="#fff" stroke-width="4" stroke-linecap="butt" stroke-linejoin="round"/>
<path d="M408 488 C410 488.7 415.7 490 420 492 C424.3 494 431.7 498.7 434 500" fill="none" stroke="#fff" stroke-width="4" stroke-linecap="butt" stroke-linejoin="round"/>
<path d="M503.6 509 L531.8 509" fill="none" stroke="#fff" stroke-width="4.5" stroke-linecap="butt" stroke-linejoin="round"/>
<path d="M517 493 L515 516" fill="none" stroke="#fff" stroke-width="4" stroke-linecap="butt" stroke-linejoin="round"/>
<path d="M575 244 C577.2 251.3 582.5 274.5 588 288 C593.5 301.5 601.7 308 608 325 C614.3 342 620.9 372.5 626 390 C631.1 407.5 634.5 418.7 638.7 430 C642.9 441.3 647.6 449.7 651 458 C654.4 466.3 656.7 470.5 659 480 C661.3 489.5 664.2 505 665 515 C665.8 525 665.3 530.8 664 540 C662.7 549.2 660.2 559 657 570 C653.8 581 647.7 598.7 645 606 C642.3 613.3 641.7 612.7 641 614" fill="none" stroke="#fff" stroke-width="5.4" stroke-linecap="butt" stroke-linejoin="round"/>
<path d="M598 320 C595 320.5 584.2 321.8 580 323 C575.8 324.2 574.5 325.3 573 327 C571.5 328.7 567.8 321.5 571 333 C574.2 344.5 587.8 384.7 592 396 C596.2 407.3 594.3 400 596 401 C597.7 402 598.2 402.5 602 402 C605.8 401.5 616.2 398.7 619 398" fill="none" stroke="#fff" stroke-width="2.5" stroke-linecap="butt" stroke-linejoin="round"/>
<path d="M584 326 C587.7 337.7 601.5 378.3 606 396 C610.5 413.7 610.2 426 611 432" fill="none" stroke="#fff" stroke-width="2.3" stroke-linecap="butt" stroke-linejoin="round"/>
<path d="M586.198 333 L596.698 330" fill="none" stroke="#fff" stroke-width="2.1" stroke-linecap="butt" stroke-linejoin="round"/>
<path d="M590.28 346 L600.78 343" fill="none" stroke="#fff" stroke-width="2.1" stroke-linecap="butt" stroke-linejoin="round"/>
<path d="M594.048 358 L604.548 355" fill="none" stroke="#fff" stroke-width="2.1" stroke-linecap="butt" stroke-linejoin="round"/>
<path d="M597.816 370 L608.316 367" fill="none" stroke="#fff" stroke-width="2.1" stroke-linecap="butt" stroke-linejoin="round"/>
<path d="M601.898 383 L612.398 380" fill="none" stroke="#fff" stroke-width="2.1" stroke-linecap="butt" stroke-linejoin="round"/>
<path d="M604 410 L627 407.5" fill="none" stroke="#fff" stroke-width="2.2" stroke-linecap="butt" stroke-linejoin="round"/>
<path d="M608 423 L627 420" fill="none" stroke="#fff" stroke-width="2.2" stroke-linecap="butt" stroke-linejoin="round"/>
<path d="M596 296 L606 293.5 L612 310" fill="none" stroke="#fff" stroke-width="2.3" stroke-linecap="round" stroke-linejoin="round"/>
<path d="M400 509 C401.3 509.8 398.3 507.9 408 513.7 C417.7 519.5 441.3 533.9 458 543.7 C474.7 553.5 491.3 564.4 508 572.5 C524.7 580.6 541.3 586.2 558 592.5 C574.7 598.8 591.3 604.6 608 610 C624.7 615.4 641.3 620.2 658 625 C674.7 629.8 697.3 635 708 638.7 C718.7 642.4 705 641.8 722 647 C739 652.2 780.3 661.8 810 670 C839.7 678.2 875 690 900 696 C925 702 940 702.4 960 706 C980 709.6 1010 715.6 1020 717.5" fill="none" stroke="#fff" stroke-width="9.6" stroke-linecap="butt" stroke-linejoin="round"/>
<path d="M620.5 615 L608 672.5" fill="none" stroke="#fff" stroke-width="4.6" stroke-linecap="round" stroke-linejoin="round"/>
<path d="M523 582.5 C521.2 588.8 515.2 607.8 512 620 C508.8 632.2 508.8 642.7 504 656 C499.2 669.3 493.6 676 483 700 C472.4 724 447.6 783.3 440.5 800" fill="none" stroke="#fff" stroke-width="5.4" stroke-linecap="butt" stroke-linejoin="round"/>
<path d="M504 656 L470 662 L436.7 666" fill="none" stroke="#fff" stroke-width="5" stroke-linecap="butt" stroke-linejoin="round"/>
<path d="M536.7 586 C535.2 595 531.1 621 528 640 C524.9 659 521.8 680 518 700 C514.2 720 507.2 750 505 760" fill="none" stroke="#fff" stroke-width="1.6" stroke-linecap="butt" stroke-linejoin="round"/>
<path d="M523 700 L500 800" fill="none" stroke="#fff" stroke-width="1.6" stroke-linecap="butt" stroke-linejoin="round"/>
<path d="M720 657.5 C716.7 671.2 705.8 716.2 700 740 C694.2 763.8 687.5 790 685 800" fill="none" stroke="#fff" stroke-width="4.8" stroke-linecap="butt" stroke-linejoin="round"/>
<path d="M437 742 L465 750 L493 757" fill="none" stroke="#fff" stroke-width="4" stroke-linecap="butt" stroke-linejoin="round"/>
<path d="M758.5 607 C758.3 608.5 759.1 614 757.5 616 C755.9 618 752.8 618.5 749 619 C745.2 619.5 738.2 618.3 735 619 C731.8 619.7 730.8 619.5 729.5 623 C728.2 626.5 727.4 637.2 727 640" fill="none" stroke="#fff" stroke-width="2.6" stroke-linecap="butt" stroke-linejoin="round"/>
<path d="M708 700 L683 800" fill="none" stroke="#fff" stroke-width="0.1" stroke-linecap="butt" stroke-linejoin="round"/>
<path d="M1066 351.5 L1120 342 L1150 337 L1152.5 356 L1175 421 L1182.5 446 L1200 500" fill="none" stroke="#fff" stroke-width="4.6" stroke-linecap="butt" stroke-linejoin="round"/>
<path d="M1047.5 720 C1052.1 722.1 1065 726.2 1075 732.5 C1085 738.8 1097.5 746.2 1107.5 757.5 C1117.5 768.8 1130.4 792.9 1135 800" fill="none" stroke="#fff" stroke-width="6.6" stroke-linecap="butt" stroke-linejoin="round"/>
<path d="M1030 775 C1031.7 769.2 1036.7 747.5 1040 740 C1043.3 732.5 1046.2 730 1050 730 C1053.8 730 1056.7 734.6 1062.5 740 C1068.3 745.4 1077.5 759.6 1085 762.5 C1092.5 765.4 1099.2 760.8 1107.5 757.5 C1115.8 754.2 1125.4 750.8 1135 742.5 C1144.6 734.2 1156.7 718.8 1165 707.5 C1173.3 696.2 1180.2 685 1185 675 C1189.8 665 1191.2 654.6 1193.7 647.5 C1196.2 640.4 1199 635 1200 632.5" fill="none" stroke="#fff" stroke-width="4.4" stroke-linecap="butt" stroke-linejoin="round"/>
<path d="M1135 740 L1200 750" fill="none" stroke="#fff" stroke-width="4" stroke-linecap="butt" stroke-linejoin="round"/>
<path d="M1152.5 701 L1162.5 706" fill="none" stroke="#fff" stroke-width="4" stroke-linecap="round" stroke-linejoin="round"/>
<path d="M1170 650 L1173.7 641 L1187.5 645" fill="none" stroke="#fff" stroke-width="3.6" stroke-linecap="butt" stroke-linejoin="round"/>
<path d="M1135 585 C1136 587.2 1140.2 593 1141 598 C1141.8 603 1140.2 612.2 1140 615" fill="none" stroke="#fff" stroke-width="3" stroke-linecap="butt" stroke-linejoin="round"/>
<path d="M1103 349 C1102.2 347.2 1099.5 341.5 1098 338 C1096.5 334.5 1094.2 330.7 1094 328 C1093.8 325.3 1095.5 322.7 1097 322 C1098.5 321.3 1101.8 322.3 1103 324 C1104.2 325.7 1104 327.8 1104 332 C1104 336.2 1103.2 346.2 1103 349" fill="none" stroke="#fff" stroke-width="2.2" stroke-linecap="butt" stroke-linejoin="round"/>
<circle cx="504.2" cy="656.2" r="5.2" fill="none" stroke="#d6cfbd" stroke-width="6.2"/>
<circle cx="504.2" cy="656.2" r="5.2" fill="none" stroke="#fff" stroke-width="4.6"/>
<circle cx="504.2" cy="656.2" r="2.9" fill="#f0f0e6" stroke="#d6cfbd" stroke-width="0.8"/>
<circle cx="722" cy="647" r="5.8" fill="none" stroke="#d6cfbd" stroke-width="8.4"/>
<circle cx="722" cy="647" r="5.8" fill="none" stroke="#fff" stroke-width="6.8"/>
<circle cx="722" cy="647" r="2.4" fill="#f6f1e4" stroke="#d6cfbd" stroke-width="0.8"/>
<path d="M713 299 C724.2 294.5 758.5 280.8 780 272 C801.5 263.2 831.4 250.3 841.7 246" fill="none" stroke="#8a8a8a" stroke-width="2.3"/>
<path d="M713 299 C724.2 294.5 758.5 280.8 780 272 C801.5 263.2 831.4 250.3 841.7 246" fill="none" stroke="#fff" stroke-width="1.3" stroke-dasharray="5 5"/>
<path d="M713 299 C724.2 294.5 758.5 280.8 780 272 C801.5 263.2 831.4 250.3 841.7 246" fill="none" stroke="#5b5b5b" stroke-width="1.5" stroke-dasharray="5 5" stroke-dashoffset="5"/>
<path d="M980 244 C979 250.6 974.1 270.7 973.7 283.5 C973.3 296.3 973.1 304.3 977.5 321 C981.9 337.7 992.1 362.7 1000 383.5 C1007.9 404.3 1018.2 429.5 1025 446 C1031.8 462.5 1038.3 476.4 1041 482.5" fill="none" stroke="#8a8a8a" stroke-width="2.2"/>
<path d="M980 244 C979 250.6 974.1 270.7 973.7 283.5 C973.3 296.3 973.1 304.3 977.5 321 C981.9 337.7 992.1 362.7 1000 383.5 C1007.9 404.3 1018.2 429.5 1025 446 C1031.8 462.5 1038.3 476.4 1041 482.5" fill="none" stroke="#fff" stroke-width="1.2" stroke-dasharray="5 5"/>
<path d="M980 244 C979 250.6 974.1 270.7 973.7 283.5 C973.3 296.3 973.1 304.3 977.5 321 C981.9 337.7 992.1 362.7 1000 383.5 C1007.9 404.3 1018.2 429.5 1025 446 C1031.8 462.5 1038.3 476.4 1041 482.5" fill="none" stroke="#5b5b5b" stroke-width="1.4" stroke-dasharray="5 5" stroke-dashoffset="5"/>
<path d="M1127 240 C1130 248.3 1139.3 275 1145 290 C1150.7 305 1155.2 315 1161 330 C1166.8 345 1174 362.3 1180 380 C1186 397.7 1192.7 421.7 1197 436 C1201.3 450.3 1204.5 461 1206 466" fill="none" stroke="#8a8a8a" stroke-width="2.1"/>
<path d="M1127 240 C1130 248.3 1139.3 275 1145 290 C1150.7 305 1155.2 315 1161 330 C1166.8 345 1174 362.3 1180 380 C1186 397.7 1192.7 421.7 1197 436 C1201.3 450.3 1204.5 461 1206 466" fill="none" stroke="#fff" stroke-width="1.1" stroke-dasharray="5 5"/>
<path d="M1127 240 C1130 248.3 1139.3 275 1145 290 C1150.7 305 1155.2 315 1161 330 C1166.8 345 1174 362.3 1180 380 C1186 397.7 1192.7 421.7 1197 436 C1201.3 450.3 1204.5 461 1206 466" fill="none" stroke="#5b5b5b" stroke-width="1.3" stroke-dasharray="5 5" stroke-dashoffset="5"/>
<path d="M1131.5 240 C1134.6 248.3 1144.2 275 1150 290 C1155.8 305 1159.8 315 1166 330 C1172.2 345 1181.3 366.7 1187 380 C1192.7 393.3 1196.5 402 1200 410 C1203.5 418 1206.7 425 1208 428" fill="none" stroke="#8a8a8a" stroke-width="3.4"/>
<path d="M1131.5 240 C1134.6 248.3 1144.2 275 1150 290 C1155.8 305 1159.8 315 1166 330 C1172.2 345 1181.3 366.7 1187 380 C1192.7 393.3 1196.5 402 1200 410 C1203.5 418 1206.7 425 1208 428" fill="none" stroke="#fff" stroke-width="2.4" stroke-dasharray="5 5"/>
<path d="M1131.5 240 C1134.6 248.3 1144.2 275 1150 290 C1155.8 305 1159.8 315 1166 330 C1172.2 345 1181.3 366.7 1187 380 C1192.7 393.3 1196.5 402 1200 410 C1203.5 418 1206.7 425 1208 428" fill="none" stroke="#5b5b5b" stroke-width="2.6" stroke-dasharray="5 5" stroke-dashoffset="5"/>
<path d="M1136 240 C1139 248 1148.5 273.7 1154 288 C1159.5 302.3 1165.3 316.3 1169 326 C1172.7 335.7 1172.8 338.7 1176 346 C1179.2 353.3 1183.3 361.7 1188 370 C1192.7 378.3 1201.3 391.7 1204 396" fill="none" stroke="#8a8a8a" stroke-width="2.1"/>
<path d="M1136 240 C1139 248 1148.5 273.7 1154 288 C1159.5 302.3 1165.3 316.3 1169 326 C1172.7 335.7 1172.8 338.7 1176 346 C1179.2 353.3 1183.3 361.7 1188 370 C1192.7 378.3 1201.3 391.7 1204 396" fill="none" stroke="#fff" stroke-width="1.1" stroke-dasharray="5 5"/>
<path d="M1136 240 C1139 248 1148.5 273.7 1154 288 C1159.5 302.3 1165.3 316.3 1169 326 C1172.7 335.7 1172.8 338.7 1176 346 C1179.2 353.3 1183.3 361.7 1188 370 C1192.7 378.3 1201.3 391.7 1204 396" fill="none" stroke="#5b5b5b" stroke-width="1.3" stroke-dasharray="5 5" stroke-dashoffset="5"/>
<path d="M1156 342.500 L1200 333.700" fill="none" stroke="#8fc0e8" stroke-width="1" stroke-dasharray="4 3"/>
<polygon points="1171,387 1181,384 1188,414 1178,417" fill="#d5d2cc" />
<polyline points="608,278.5 628,336 648,392 668,431 683,427 730.5,420 772,398 781.7,392 828,372 831.7,379.7 823,388.5 840.5,429.7 852,460 900,515 918.7,557.5 927.5,554.5 983.7,531.2 998.7,525.5 1003,538" fill="none" stroke="#6f6f6f" stroke-width="0.7" />
<circle cx="628" cy="336" r="1.9" fill="#f1f0ea" stroke="#6f6f6f" stroke-width="0.7"/>
<circle cx="648" cy="392" r="1.9" fill="#f1f0ea" stroke="#6f6f6f" stroke-width="0.7"/>
<circle cx="683" cy="427" r="1.9" fill="#f1f0ea" stroke="#6f6f6f" stroke-width="0.7"/>
<circle cx="730.5" cy="420" r="1.9" fill="#f1f0ea" stroke="#6f6f6f" stroke-width="0.7"/>
<circle cx="781.7" cy="392" r="1.9" fill="#f1f0ea" stroke="#6f6f6f" stroke-width="0.7"/>
<circle cx="831.7" cy="379.7" r="1.9" fill="#f1f0ea" stroke="#6f6f6f" stroke-width="0.7"/>
<circle cx="840.5" cy="429.7" r="1.9" fill="#f1f0ea" stroke="#6f6f6f" stroke-width="0.7"/>
<circle cx="927.5" cy="554.5" r="1.9" fill="#f1f0ea" stroke="#6f6f6f" stroke-width="0.7"/>
<circle cx="983.7" cy="531.2" r="1.9" fill="#f1f0ea" stroke="#6f6f6f" stroke-width="0.7"/>
<circle cx="584" cy="273" r="1.9" fill="#f1f0ea" stroke="#6f6f6f" stroke-width="0.7"/>
<polyline points="584,273 608,268" fill="none" stroke="#6f6f6f" stroke-width="0.7" />
<path d="M1208 338 C1206.3 334.7 1201 323.8 1198 318 C1195 312.2 1192.7 307.8 1190 303 C1187.3 298.2 1185.7 292.4 1182 289 C1178.3 285.6 1173.3 283.8 1168 282.5 C1162.7 281.2 1155.7 281.2 1150 281.5 C1144.3 281.8 1138.8 282.8 1134 284 C1129.2 285.2 1126.7 286 1121 288.5 C1115.3 291 1107.7 292.8 1100 299 C1092.3 305.2 1081.2 317.3 1075 326 C1068.8 334.7 1065.2 342.7 1062.5 351 C1059.8 359.3 1058.7 367.7 1058.7 376 C1058.7 384.3 1059.8 391 1062.5 401 C1065.2 411 1071.4 427.5 1075 436 C1078.6 444.5 1080.2 443.8 1084 452 C1087.8 460.2 1091.9 472.8 1097.5 485 C1103.1 497.2 1112.1 512.5 1117.5 525 C1122.9 537.5 1127.3 549.2 1130 560 C1132.7 570.8 1133.7 580.8 1133.7 590 C1133.7 599.2 1131.9 608.3 1130 615 C1128.1 621.7 1126.7 622.1 1122.5 630 C1118.3 637.9 1112.9 652.1 1105 662.5 C1097.1 672.9 1084.6 684.6 1075 692.5 C1065.4 700.4 1053.3 706.4 1047.5 710 C1041.7 713.6 1041.2 713.3 1040 714" fill="none" stroke="#dcc25a" stroke-width="11.4" stroke-linejoin="round"/>
<path d="M1026 728 C1023.3 730.8 1016.4 738.8 1010 745 C1003.6 751.2 995.8 758.2 987.5 765 C979.2 771.8 969.6 779.2 960 786 C950.4 792.8 935 802.7 930 806" fill="none" stroke="#dcc25a" stroke-width="11.4" stroke-linejoin="round"/>
<circle cx="1034.2" cy="718.2" r="9.8" fill="none" stroke="#dcc25a" stroke-width="9.4"/>
<path d="M1208 338 C1206.3 334.7 1201 323.8 1198 318 C1195 312.2 1192.7 307.8 1190 303 C1187.3 298.2 1185.7 292.4 1182 289 C1178.3 285.6 1173.3 283.8 1168 282.5 C1162.7 281.2 1155.7 281.2 1150 281.5 C1144.3 281.8 1138.8 282.8 1134 284 C1129.2 285.2 1126.7 286 1121 288.5 C1115.3 291 1107.7 292.8 1100 299 C1092.3 305.2 1081.2 317.3 1075 326 C1068.8 334.7 1065.2 342.7 1062.5 351 C1059.8 359.3 1058.7 367.7 1058.7 376 C1058.7 384.3 1059.8 391 1062.5 401 C1065.2 411 1071.4 427.5 1075 436 C1078.6 444.5 1080.2 443.8 1084 452 C1087.8 460.2 1091.9 472.8 1097.5 485 C1103.1 497.2 1112.1 512.5 1117.5 525 C1122.9 537.5 1127.3 549.2 1130 560 C1132.7 570.8 1133.7 580.8 1133.7 590 C1133.7 599.2 1131.9 608.3 1130 615 C1128.1 621.7 1126.7 622.1 1122.5 630 C1118.3 637.9 1112.9 652.1 1105 662.5 C1097.1 672.9 1084.6 684.6 1075 692.5 C1065.4 700.4 1053.3 706.4 1047.5 710 C1041.7 713.6 1041.2 713.3 1040 714" fill="none" stroke="#f8e67c" stroke-width="9.6" stroke-linejoin="round"/>
<path d="M1026 728 C1023.3 730.8 1016.4 738.8 1010 745 C1003.6 751.2 995.8 758.2 987.5 765 C979.2 771.8 969.6 779.2 960 786 C950.4 792.8 935 802.7 930 806" fill="none" stroke="#f8e67c" stroke-width="9.6" stroke-linejoin="round"/>
<circle cx="1034.2" cy="718.2" r="9.8" fill="none" stroke="#f8e67c" stroke-width="7.8"/>
<circle cx="1034.2" cy="718.2" r="5.6" fill="#fff" stroke="#dcc25a" stroke-width="0.8"/>
<text x="425.2" y="258.6" dy="0.36em" transform="rotate(2 425.2 258.6)" font-family="Liberation Sans, sans-serif" font-size="10.2" text-anchor="middle" fill="#1a1a1a" stroke="#fff" stroke-width="3" stroke-linejoin="round" paint-order="stroke" >Vodní</text>
<text x="471.7" y="259.6" dy="0.36em" transform="rotate(3 471.7 259.6)" font-family="Liberation Sans, sans-serif" font-size="10.5" text-anchor="middle" fill="#1a1a1a" stroke="#fff" stroke-width="3" stroke-linejoin="round" paint-order="stroke" >Lidická</text>
<text x="546.3" y="304.7" dy="0.36em" transform="rotate(-30 546.3 304.7)" font-family="Liberation Sans, sans-serif" font-size="11.4" text-anchor="middle" fill="#1a1a1a" stroke="#fff" stroke-width="3" stroke-linejoin="round" paint-order="stroke" >Zámecká</text>
<text x="421" y="346.7" dy="0.36em" transform="rotate(8 421 346.7)" font-family="Liberation Sans, sans-serif" font-size="11" text-anchor="middle" fill="#1a1a1a" stroke="#fff" stroke-width="3" stroke-linejoin="round" paint-order="stroke" >Zámecká</text>
<text x="577.8" y="259.2" dy="0.36em" transform="rotate(72 577.8 259.2)" font-family="Liberation Sans, sans-serif" font-size="10.9" text-anchor="middle" fill="#1a1a1a" stroke="#fff" stroke-width="3" stroke-linejoin="round" paint-order="stroke" >1. máje</text>
<text x="631" y="401" dy="0.36em" transform="rotate(72 631 401)" font-family="Liberation Sans, sans-serif" font-size="10.9" text-anchor="middle" fill="#1a1a1a" stroke="#fff" stroke-width="3" stroke-linejoin="round" paint-order="stroke" >1. máje</text>
<text x="662.5" y="546.2" dy="0.36em" transform="rotate(-80 662.5 546.2)" font-family="Liberation Sans, sans-serif" font-size="10.9" text-anchor="middle" fill="#1a1a1a" stroke="#fff" stroke-width="3" stroke-linejoin="round" paint-order="stroke" >1. máje</text>
<text x="481.5" y="423.7" dy="0.36em" transform="rotate(-87 481.5 423.7)" font-family="Liberation Sans, sans-serif" font-size="10.5" text-anchor="middle" fill="#1a1a1a" stroke="#fff" stroke-width="3" stroke-linejoin="round" paint-order="stroke" >Vrchlického</text>
<text x="416" y="489.2" dy="0.36em" transform="rotate(18 416 489.2)" font-family="Liberation Sans, sans-serif" font-size="10.5" text-anchor="middle" fill="#1a1a1a" stroke="#fff" stroke-width="3" stroke-linejoin="round" paint-order="stroke" >Nová</text>
<text x="540" y="490.2" dy="0.36em" transform="rotate(-13 540 490.2)" font-family="Liberation Sans, sans-serif" font-size="11.5" text-anchor="middle" fill="#1a1a1a" stroke="#fff" stroke-width="3" stroke-linejoin="round" paint-order="stroke" >Nádražní</text>
<text x="676.5" y="449.3" dy="0.36em" transform="rotate(-20 676.5 449.3)" font-family="Liberation Sans, sans-serif" font-size="11.3" text-anchor="middle" fill="#1a1a1a" stroke="#fff" stroke-width="3" stroke-linejoin="round" paint-order="stroke" >Nádražní</text>
<text x="489.2" y="558.5" dy="0.36em" transform="rotate(25 489.2 558.5)" font-family="Liberation Sans, sans-serif" font-size="12" text-anchor="middle" fill="#1a1a1a" stroke="#fff" stroke-width="3" stroke-linejoin="round" paint-order="stroke" >Družstevní</text>
<text x="639.7" y="619.7" dy="0.36em" transform="rotate(19 639.7 619.7)" font-family="Liberation Sans, sans-serif" font-size="12" text-anchor="middle" fill="#1a1a1a" stroke="#fff" stroke-width="3" stroke-linejoin="round" paint-order="stroke" >Družstevní</text>
<text x="875.2" y="688" dy="0.36em" transform="rotate(14 875.2 688)" font-family="Liberation Sans, sans-serif" font-size="12" text-anchor="middle" fill="#1a1a1a" stroke="#fff" stroke-width="3" stroke-linejoin="round" paint-order="stroke" >Družstevní</text>
<text x="1078.2" y="734.2" dy="0.36em" transform="rotate(33 1078.2 734.2)" font-family="Liberation Sans, sans-serif" font-size="12" text-anchor="middle" fill="#1a1a1a" stroke="#fff" stroke-width="3" stroke-linejoin="round" paint-order="stroke" >Družstevní</text>
<text x="968" y="779" dy="0.36em" transform="rotate(-36 968 779)" font-family="Liberation Sans, sans-serif" font-size="12" text-anchor="middle" fill="#1a1a1a" stroke="#fff" stroke-width="3" stroke-linejoin="round" paint-order="stroke" >Družstevní</text>
<text x="1120.2" y="632" dy="0.36em" transform="rotate(-70 1120.2 632)" font-family="Liberation Sans, sans-serif" font-size="12" text-anchor="middle" fill="#1a1a1a" stroke="#fff" stroke-width="3" stroke-linejoin="round" paint-order="stroke" >Družstevní</text>
<text x="1071.2" y="416.7" dy="0.36em" transform="rotate(72 1071.2 416.7)" font-family="Liberation Sans, sans-serif" font-size="12" text-anchor="middle" fill="#1a1a1a" stroke="#fff" stroke-width="3" stroke-linejoin="round" paint-order="stroke" >Družstevní</text>
<text x="687" y="775.5" dy="0.36em" transform="rotate(-80 687 775.5)" font-family="Liberation Sans, sans-serif" font-size="12" text-anchor="middle" fill="#1a1a1a" stroke="#fff" stroke-width="3" stroke-linejoin="round" paint-order="stroke" >Družstevní</text>
<text x="614.5" y="644.2" dy="0.36em" transform="rotate(-80 614.5 644.2)" font-family="Liberation Sans, sans-serif" font-size="10.8" text-anchor="middle" fill="#1a1a1a" stroke="#fff" stroke-width="3" stroke-linejoin="round" paint-order="stroke" >U Cihelny</text>
<text x="475.2" y="726.5" dy="0.36em" transform="rotate(-72 475.2 726.5)" font-family="Liberation Sans, sans-serif" font-size="10" text-anchor="middle" fill="#1a1a1a" stroke="#fff" stroke-width="3" stroke-linejoin="round" paint-order="stroke" >Za Penzionem</text>
<text x="1153.8" y="349.2" dy="0.36em" transform="rotate(68 1153.8 349.2)" font-family="Liberation Sans, sans-serif" font-size="10" text-anchor="middle" fill="#1a1a1a" stroke="#fff" stroke-width="2.4" stroke-linejoin="round" paint-order="stroke" >í</text>
<text x="1148.3" y="341.6" dy="0.36em" transform="rotate(32 1148.3 341.6)" font-family="Liberation Sans, sans-serif" font-size="10" text-anchor="middle" fill="#1a1a1a" stroke="#fff" stroke-width="2.4" stroke-linejoin="round" paint-order="stroke" >ž</text>
<text x="1133.3" y="339" dy="0.36em" transform="rotate(-10 1133.3 339)" font-family="Liberation Sans, sans-serif" font-size="10" text-anchor="middle" fill="#1a1a1a" stroke="#fff" stroke-width="2.6" stroke-linejoin="round" paint-order="stroke" >Nádra</text>
<text x="1199" y="622" dy="0.36em" transform="rotate(-75 1199 622)" font-family="Liberation Sans, sans-serif" font-size="10.5" text-anchor="middle" fill="#1a1a1a" stroke="#fff" stroke-width="3" stroke-linejoin="round" paint-order="stroke" >Nádraží</text>
<text x="1203" y="500" dy="0.36em" transform="rotate(72 1203 500)" font-family="Liberation Sans, sans-serif" font-size="10.5" text-anchor="middle" fill="#1a1a1a" stroke="#fff" stroke-width="3" stroke-linejoin="round" paint-order="stroke" >Nádražní</text>
<text x="1181.8" y="290.8" dy="0.36em" transform="rotate(68 1181.8 290.8)" font-family="Liberation Sans, sans-serif" font-size="11" text-anchor="middle" fill="#1a1a1a" stroke="#fff" stroke-width="3" stroke-linejoin="round" paint-order="stroke" >Kosovská</text>
<text x="1155" y="469" font-family="Liberation Sans, sans-serif" font-size="10.5" font-style="italic" fill="#222" stroke="#f1efe9" stroke-width="2" paint-order="stroke" textLength="44" lengthAdjust="spacingAndGlyphs">Mohelnice</text>
<rect x="1079.4" y="464.4" width="28" height="16.8" rx="1.6" fill="#fff" stroke="#4b7fc8" stroke-width="1"/>
<rect x="1081" y="466" width="24.8" height="13.600" rx="0.8" fill="#4b7fc8"/>
<text x="1093.4" y="477" font-family="Liberation Sans, sans-serif" font-size="11" font-weight="bold" text-anchor="middle" fill="#fff" textLength="20" lengthAdjust="spacingAndGlyphs">444</text>
<defs><linearGradient id="pg" x1="0" y1="0" x2="0" y2="1"><stop offset="0" stop-color="#4f9fe9"/><stop offset="0.550" stop-color="#3287dc"/><stop offset="1" stop-color="#0e5ab6"/></linearGradient></defs>
<g>
<path d="M803 571.400 C797.500 562 788.100 556 788.100 546.600 C788.100 538.400 794.700 532.100 803 532.100 C811.300 532.100 817.900 538.400 817.900 546.600 C817.900 556 808.500 562 803 571.400 Z" fill="url(#pg)" stroke="#93c9f4" stroke-width="1.700" stroke-linejoin="round"/>
<circle cx="803" cy="546.900" r="9.900" fill="#ea3a30"/>
<g transform="rotate(-20 803 546.900)">
<ellipse cx="803" cy="546.900" rx="7.400" ry="3" fill="none" stroke="#fff" stroke-width="2"/>
<path d="M809.800 543.300 l2.600 2.200 M796.200 550.500 l-2.600 -2.200" stroke="#ea3a30" stroke-width="1.300"/>
<path d="M799 547.600 h2.600 M805 546.200 h2.600" stroke="#fff" stroke-width="0.900"/>
</g>
</g>
<rect x="1119.500" y="262.300" width="64.400" height="26.400" rx="4" fill="#fff"/>
<line x1="1151.700" y1="262.300" x2="1151.700" y2="288.700" stroke="#e2e2e2" stroke-width="1"/>
<path d="M1130 275.500 h11.500 M1162.700 275.500 h11.500 M1168.450 269.700 v11.600" stroke="#333" stroke-width="2" fill="none"/>
<!--MAPEND-->
</svg>
</div>
</body>
</html>
